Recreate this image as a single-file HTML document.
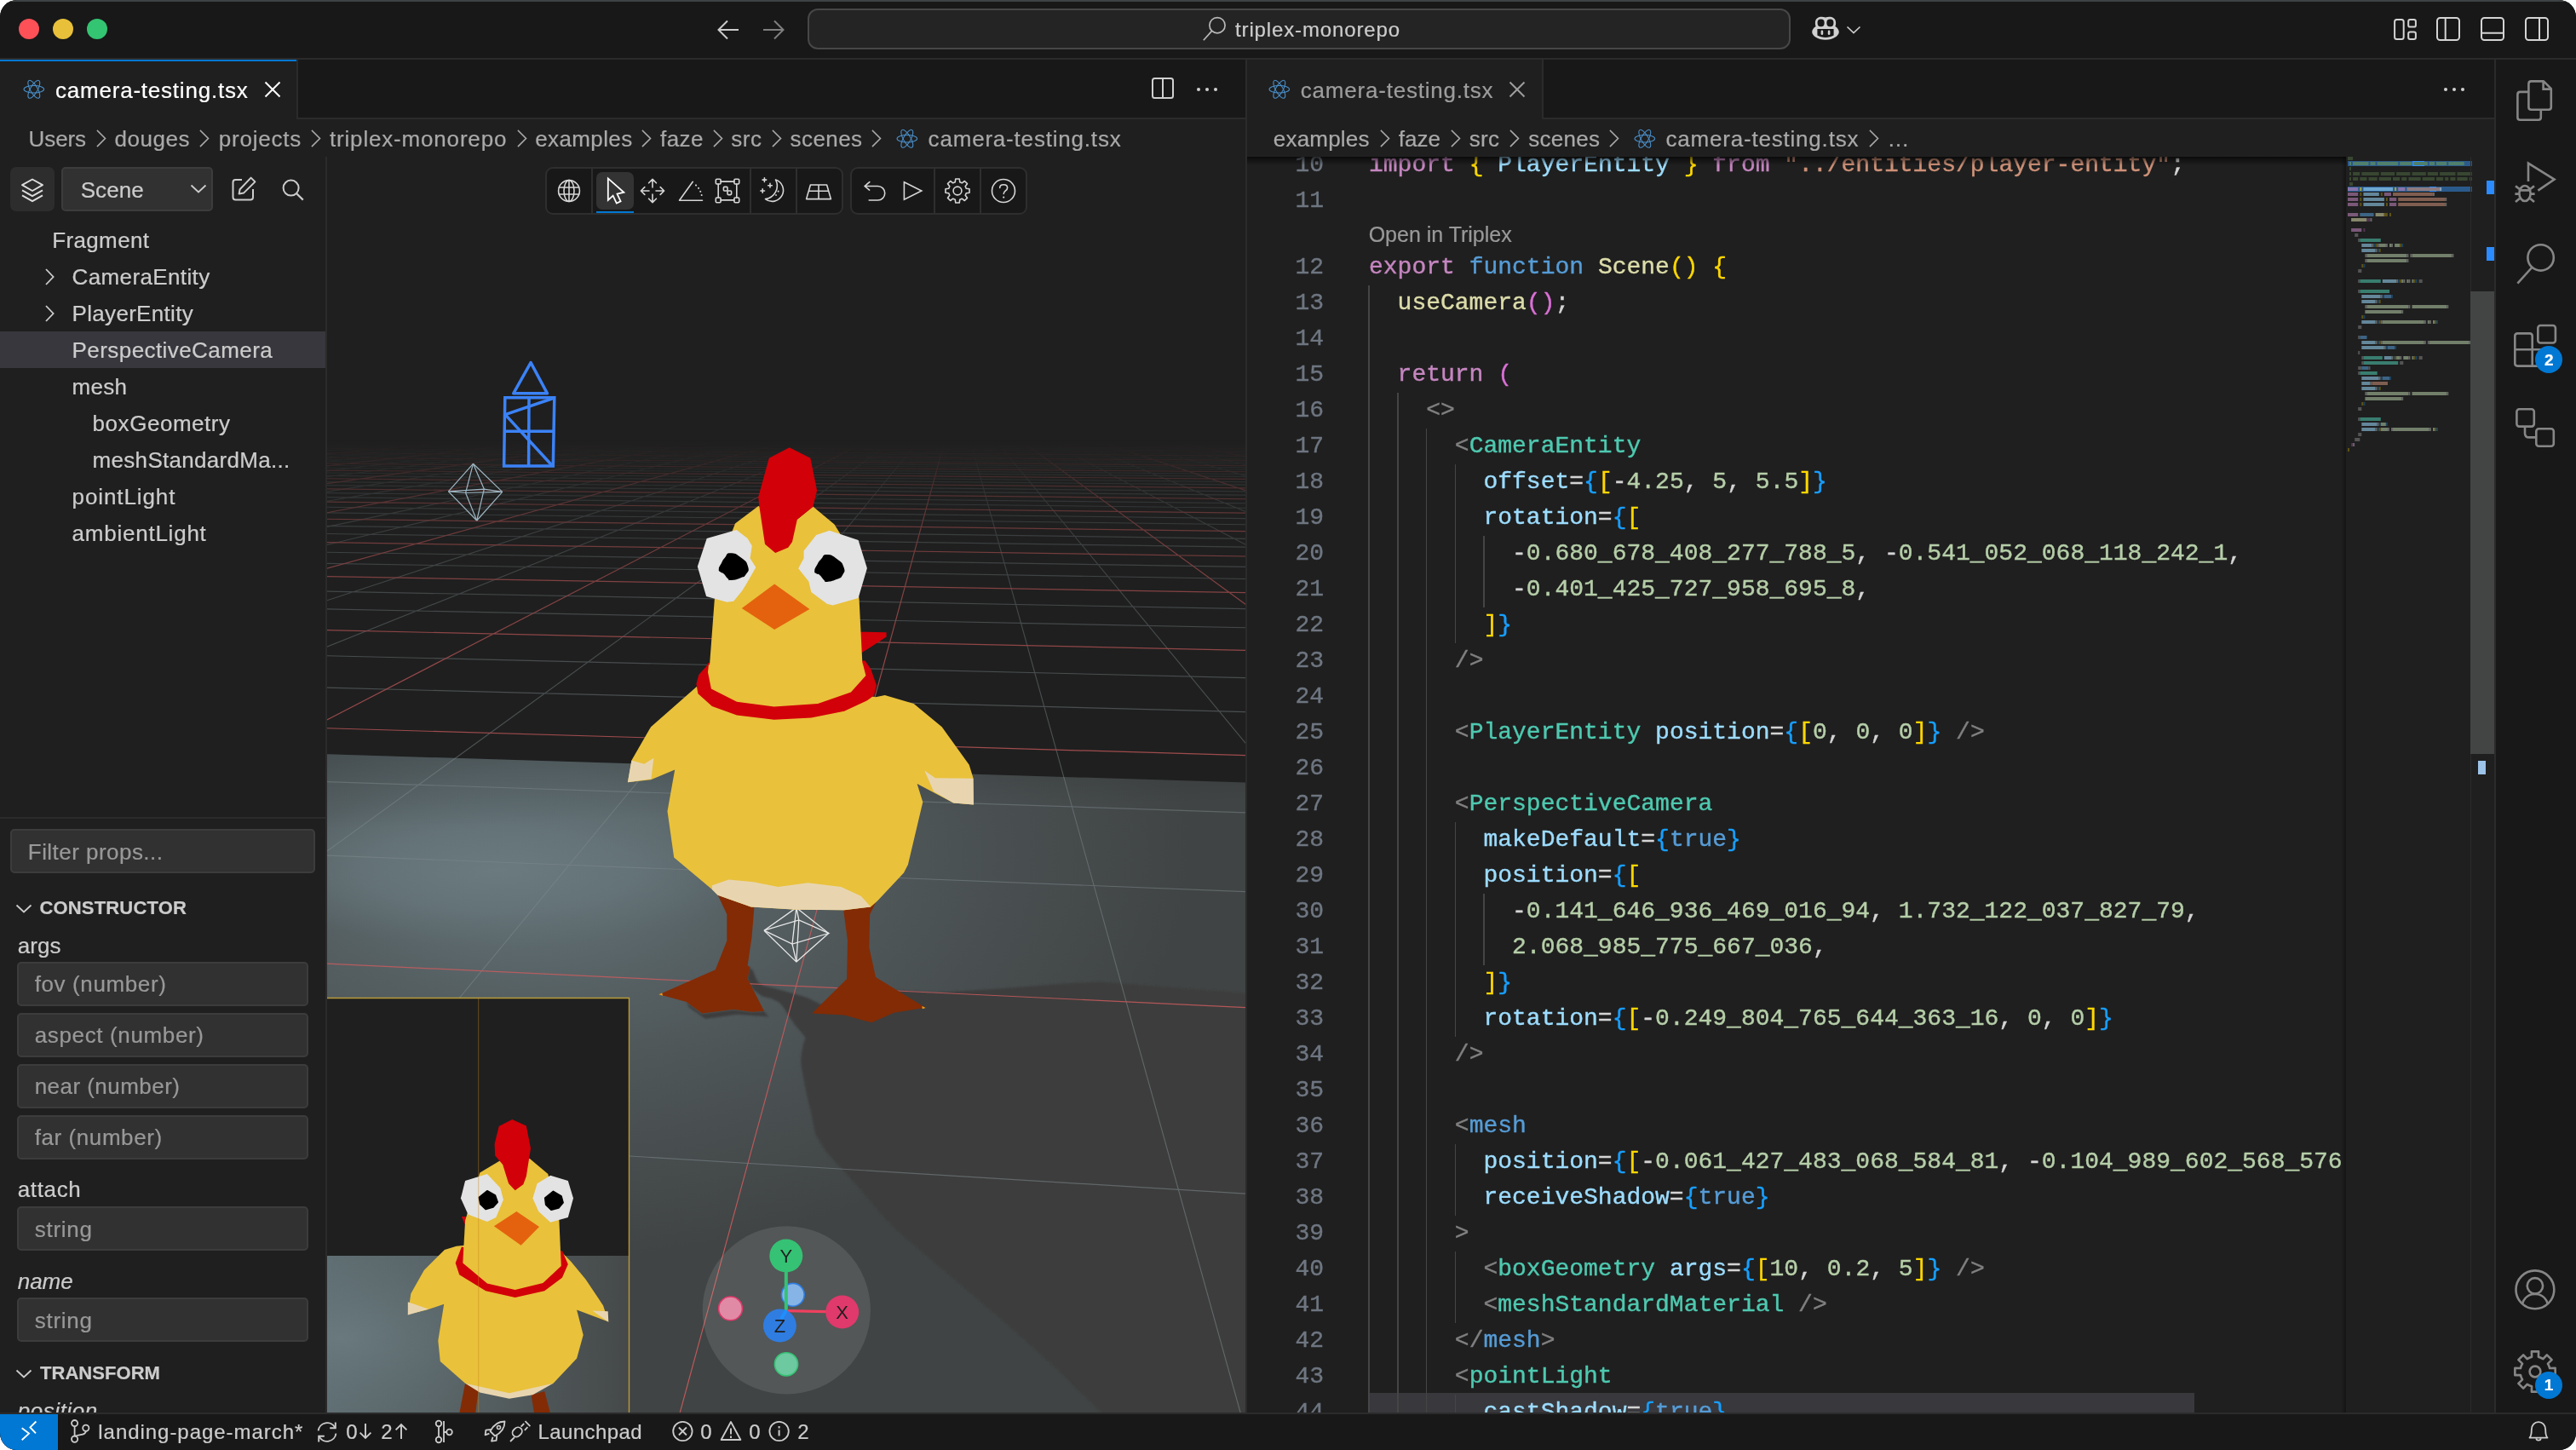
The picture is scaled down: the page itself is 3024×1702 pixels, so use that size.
<!DOCTYPE html><html lang="en"><head><meta charset="utf-8"><title>camera-testing.tsx - triplex-monorepo</title><style>
html,body{margin:0;padding:0;background:#ffffff;}
body{width:3024px;height:1702px;overflow:hidden;position:relative;font-family:"Liberation Sans",sans-serif;}
#win{transform:translateZ(0);will-change:transform;position:absolute;left:0;top:0;width:3024px;height:1702px;overflow:hidden;border-radius:20px;background:#181818;}
.b{position:absolute;display:block;}
.t{position:absolute;white-space:pre;font-family:"Liberation Sans",sans-serif;-webkit-text-stroke:0.22px;}
.ln{position:absolute;left:1464px;width:90px;text-align:right;font-family:"Liberation Mono",monospace;font-size:28px;line-height:42px;color:#6e7681;height:42px;-webkit-text-stroke:0.35px;}
.cl{position:absolute;left:1607px;white-space:pre;font-family:"Liberation Mono",monospace;font-size:28px;line-height:42px;height:42px;color:#d4d4d4;-webkit-text-stroke:0.4px;}
</style></head><body><div id="win"><div class="b " style="left:0px;top:0px;width:3024px;height:68px;background:#181818;"></div><div class="b " style="left:0px;top:68px;width:3024px;height:2px;background:#2b2b2b;"></div><div class="b " style="left:22px;top:22px;width:24px;height:24px;background:#fe5057;border-radius:50%;"></div><div class="b " style="left:62px;top:22px;width:24px;height:24px;background:#e8c03a;border-radius:50%;"></div><div class="b " style="left:102px;top:22px;width:24px;height:24px;background:#33c572;border-radius:50%;"></div><svg class="b" style="left:841px;top:23px;" width="28" height="24" viewBox="0 0 28 24" fill="none"><path d="M26 12 H2.5 M13 1.5 L2.5 12 L13 22.5" stroke="#cccccc" stroke-width="2"/></svg><svg class="b" style="left:893.5px;top:23px;" width="28" height="24" viewBox="0 0 28 24" fill="none"><path d="M2 12 H25.5 M15 1.5 L25.5 12 L15 22.5" stroke="#7f7f7f" stroke-width="2"/></svg><div class="b " style="left:948px;top:10px;width:1154px;height:48px;background:#242424;border:2px solid #474747;border-radius:12px;box-sizing:border-box;"></div><svg class="b" style="left:1411px;top:18px;" width="32" height="32" viewBox="0 0 32 32" fill="none"><circle cx="18" cy="11.7" r="9.1" stroke="#b8b8b8" stroke-width="1.7"/><path d="M11.6 18.4 L1.8 29.2" stroke="#b8b8b8" stroke-width="1.7"/></svg><div class="t " style="left:1450.0px;top:19.3px;font-size:24px;line-height:31px;color:#cccccc;letter-spacing:0.869px;">triplex-monorepo</div><svg class="b" style="left:2126px;top:19px;" width="34" height="29" viewBox="0 0 34 29" fill="none"><path d="M17 1.5 C12 -0.5 5.5 1 5 6.5 C4.7 9 5 10.5 5.6 12 C3 13.5 1.2 16 1.2 18.5 C1.2 23 8 27.8 17 27.8 C26 27.8 32.8 23 32.8 18.5 C32.8 16 31 13.5 28.4 12 C29 10.5 29.3 9 29 6.5 C28.5 1 22 -0.5 17 1.5 Z" fill="#d0d0d0"/><rect x="7.6" y="3.6" width="8" height="8.6" rx="3.6" fill="#181818"/><rect x="18.4" y="3.6" width="8" height="8.6" rx="3.6" fill="#181818"/><path d="M7.4 15 H26.6 V22.6 C24 24.2 20.5 25 17 25 C13.5 25 10 24.2 7.4 22.6 Z" fill="#181818"/><rect x="11.6" y="16.6" width="2.6" height="5.4" rx="1.3" fill="#d0d0d0"/><rect x="19.8" y="16.6" width="2.6" height="5.4" rx="1.3" fill="#d0d0d0"/></svg><svg class="b" style="left:2166px;top:28px;" width="20" height="14" viewBox="0 0 20 14" fill="none"><path d="M2.5 3.5 L10 10.5 L17.5 3.5" stroke="#cccccc" stroke-width="1.7"/></svg><svg class="b" style="left:2808px;top:20px;" width="30" height="28" viewBox="0 0 30 28" fill="none"><rect x="3.1" y="3" width="10.6" height="23" rx="2.5" stroke="#d4d4d4" stroke-width="2"/><rect x="19.2" y="3" width="8.7" height="8.6" rx="2.2" stroke="#d4d4d4" stroke-width="2"/><rect x="19.2" y="17.4" width="8.7" height="8.6" rx="2.2" stroke="#d4d4d4" stroke-width="2"/></svg><svg class="b" style="left:2859px;top:20px;" width="30" height="28" viewBox="0 0 30 28" fill="none"><rect x="2" y="1" width="26" height="26" rx="3.5" stroke="#d4d4d4" stroke-width="2"/><path d="M11.7 1 V27" stroke="#d4d4d4" stroke-width="2"/></svg><svg class="b" style="left:2911px;top:20px;" width="30" height="28" viewBox="0 0 30 28" fill="none"><rect x="2" y="1" width="26" height="26" rx="3.5" stroke="#d4d4d4" stroke-width="2"/><path d="M2 18.8 H28" stroke="#d4d4d4" stroke-width="2"/></svg><svg class="b" style="left:2963px;top:20px;" width="30" height="28" viewBox="0 0 30 28" fill="none"><rect x="2" y="1" width="26" height="26" rx="3.5" stroke="#d4d4d4" stroke-width="2"/><path d="M18 1 V27" stroke="#d4d4d4" stroke-width="2"/></svg><div class="b " style="left:0px;top:70px;width:1462px;height:68px;background:#181818;"></div><div class="b " style="left:0px;top:138px;width:1462px;height:2px;background:#2b2b2b;"></div><div class="b " style="left:0px;top:70px;width:348px;height:70px;background:#1f1f1f;"></div><div class="b " style="left:0px;top:70px;width:348px;height:2px;background:#0078d4;"></div><div class="b " style="left:348px;top:70px;width:2px;height:70px;background:#2b2b2b;"></div><svg class="b" style="left:26.9px;top:91.5px;" width="25.625" height="25.625" viewBox="0 0 25.625 25.625" fill="none"><ellipse cx="12.8125" cy="12.8125" rx="11.8125" ry="4.2524999999999995" transform="rotate(0 12.8125 12.8125)" stroke="#4a8fca" stroke-width="1.05"/><ellipse cx="12.8125" cy="12.8125" rx="11.8125" ry="4.2524999999999995" transform="rotate(60 12.8125 12.8125)" stroke="#4a8fca" stroke-width="1.05"/><ellipse cx="12.8125" cy="12.8125" rx="11.8125" ry="4.2524999999999995" transform="rotate(120 12.8125 12.8125)" stroke="#4a8fca" stroke-width="1.05"/></svg><div class="t " style="left:65.0px;top:88.9px;font-size:26px;line-height:34px;color:#ffffff;letter-spacing:0.783px;">camera-testing.tsx</div><svg class="b" style="left:310px;top:95px;" width="20" height="20" viewBox="0 0 20 20" fill="none"><path d="M1.5 1.5 L18.5 18.5 M18.5 1.5 L1.5 18.5" stroke="#ffffff" stroke-width="2"/></svg><svg class="b" style="left:1351px;top:90px;" width="28" height="28" viewBox="0 0 28 28" fill="none"><rect x="2" y="2" width="24" height="23" rx="2.5" stroke="#d0d0d0" stroke-width="2"/><path d="M14 2 V25" stroke="#d0d0d0" stroke-width="2"/></svg><svg class="b" style="left:1404px;top:101px;" width="26" height="8" viewBox="0 0 26 8" fill="none"><circle cx="3" cy="4" r="2.05" fill="#d0d0d0"/><circle cx="13" cy="4" r="2.05" fill="#d0d0d0"/><circle cx="23" cy="4" r="2.05" fill="#d0d0d0"/></svg><div class="b " style="left:0px;top:140px;width:1462px;height:44px;background:#1f1f1f;"></div><div class="t " style="left:33.6px;top:145.5px;font-size:26px;line-height:34px;color:#a9a9a9;letter-spacing:-0.101px;">Users</div><svg class="b" style="left:112.5px;top:152.0px;" width="12.5" height="21" viewBox="0 0 12.5 21" fill="none"><path d="M1.5 1.5 L10.5 10.5 L1.5 19.5" stroke="#a9a9a9" stroke-width="1.6" stroke-linecap="square"/></svg><div class="t " style="left:134.6px;top:145.5px;font-size:26px;line-height:34px;color:#a9a9a9;letter-spacing:0.515px;">douges</div><svg class="b" style="left:234px;top:152.0px;" width="12.5" height="21" viewBox="0 0 12.5 21" fill="none"><path d="M1.5 1.5 L10.5 10.5 L1.5 19.5" stroke="#a9a9a9" stroke-width="1.6" stroke-linecap="square"/></svg><div class="t " style="left:256.8px;top:145.5px;font-size:26px;line-height:34px;color:#a9a9a9;letter-spacing:0.769px;">projects</div><svg class="b" style="left:364.5px;top:152.0px;" width="12.5" height="21" viewBox="0 0 12.5 21" fill="none"><path d="M1.5 1.5 L10.5 10.5 L1.5 19.5" stroke="#a9a9a9" stroke-width="1.6" stroke-linecap="square"/></svg><div class="t " style="left:387.0px;top:145.5px;font-size:26px;line-height:34px;color:#a9a9a9;letter-spacing:0.819px;">triplex-monorepo</div><svg class="b" style="left:606.5px;top:152.0px;" width="12.5" height="21" viewBox="0 0 12.5 21" fill="none"><path d="M1.5 1.5 L10.5 10.5 L1.5 19.5" stroke="#a9a9a9" stroke-width="1.6" stroke-linecap="square"/></svg><div class="t " style="left:628.3px;top:145.5px;font-size:26px;line-height:34px;color:#a9a9a9;letter-spacing:0.365px;">examples</div><svg class="b" style="left:753px;top:152.0px;" width="12.5" height="21" viewBox="0 0 12.5 21" fill="none"><path d="M1.5 1.5 L10.5 10.5 L1.5 19.5" stroke="#a9a9a9" stroke-width="1.6" stroke-linecap="square"/></svg><div class="t " style="left:775.0px;top:145.5px;font-size:26px;line-height:34px;color:#a9a9a9;letter-spacing:0.411px;">faze</div><svg class="b" style="left:836.6px;top:152.0px;" width="12.5" height="21" viewBox="0 0 12.5 21" fill="none"><path d="M1.5 1.5 L10.5 10.5 L1.5 19.5" stroke="#a9a9a9" stroke-width="1.6" stroke-linecap="square"/></svg><div class="t " style="left:858.3px;top:145.5px;font-size:26px;line-height:34px;color:#a9a9a9;letter-spacing:0.509px;">src</div><svg class="b" style="left:906px;top:152.0px;" width="12.5" height="21" viewBox="0 0 12.5 21" fill="none"><path d="M1.5 1.5 L10.5 10.5 L1.5 19.5" stroke="#a9a9a9" stroke-width="1.6" stroke-linecap="square"/></svg><div class="t " style="left:927.6px;top:145.5px;font-size:26px;line-height:34px;color:#a9a9a9;letter-spacing:0.418px;">scenes</div><svg class="b" style="left:1023px;top:152.0px;" width="12.5" height="21" viewBox="0 0 12.5 21" fill="none"><path d="M1.5 1.5 L10.5 10.5 L1.5 19.5" stroke="#a9a9a9" stroke-width="1.6" stroke-linecap="square"/></svg><svg class="b" style="left:1051.9px;top:150.2px;" width="25.625" height="25.625" viewBox="0 0 25.625 25.625" fill="none"><ellipse cx="12.8125" cy="12.8125" rx="11.8125" ry="4.2524999999999995" transform="rotate(0 12.8125 12.8125)" stroke="#4a8fca" stroke-width="1.05"/><ellipse cx="12.8125" cy="12.8125" rx="11.8125" ry="4.2524999999999995" transform="rotate(60 12.8125 12.8125)" stroke="#4a8fca" stroke-width="1.05"/><ellipse cx="12.8125" cy="12.8125" rx="11.8125" ry="4.2524999999999995" transform="rotate(120 12.8125 12.8125)" stroke="#4a8fca" stroke-width="1.05"/></svg><div class="t " style="left:1089.6px;top:145.5px;font-size:26px;line-height:34px;color:#a9a9a9;letter-spacing:0.805px;">camera-testing.tsx</div><div class="b " style="left:1462px;top:70px;width:2px;height:1588px;background:#2b2b2b;"></div><div class="b " style="left:1464px;top:70px;width:1464px;height:68px;background:#181818;"></div><div class="b " style="left:1464px;top:138px;width:1464px;height:2px;background:#2b2b2b;"></div><div class="b " style="left:1464px;top:70px;width:346px;height:70px;background:#1f1f1f;"></div><div class="b " style="left:1810px;top:70px;width:2px;height:70px;background:#2b2b2b;"></div><svg class="b" style="left:1488.8px;top:91.6px;" width="25.625" height="25.625" viewBox="0 0 25.625 25.625" fill="none"><ellipse cx="12.8125" cy="12.8125" rx="11.8125" ry="4.2524999999999995" transform="rotate(0 12.8125 12.8125)" stroke="#4a8fca" stroke-width="1.05"/><ellipse cx="12.8125" cy="12.8125" rx="11.8125" ry="4.2524999999999995" transform="rotate(60 12.8125 12.8125)" stroke="#4a8fca" stroke-width="1.05"/><ellipse cx="12.8125" cy="12.8125" rx="11.8125" ry="4.2524999999999995" transform="rotate(120 12.8125 12.8125)" stroke="#4a8fca" stroke-width="1.05"/></svg><div class="t " style="left:1526.8px;top:88.9px;font-size:26px;line-height:34px;color:#9d9d9d;letter-spacing:0.783px;">camera-testing.tsx</div><svg class="b" style="left:1771px;top:95px;" width="20" height="20" viewBox="0 0 20 20" fill="none"><path d="M1.5 1.5 L18.5 18.5 M18.5 1.5 L1.5 18.5" stroke="#9d9d9d" stroke-width="2"/></svg><svg class="b" style="left:2868px;top:101px;" width="26" height="8" viewBox="0 0 26 8" fill="none"><circle cx="3" cy="4" r="2.05" fill="#d0d0d0"/><circle cx="13" cy="4" r="2.05" fill="#d0d0d0"/><circle cx="23" cy="4" r="2.05" fill="#d0d0d0"/></svg><div class="b " style="left:1464px;top:140px;width:1464px;height:44px;background:#1f1f1f;"></div><div class="t " style="left:1494.8px;top:145.5px;font-size:26px;line-height:34px;color:#a9a9a9;letter-spacing:0.190px;">examples</div><svg class="b" style="left:1619.5px;top:152.0px;" width="12.5" height="21" viewBox="0 0 12.5 21" fill="none"><path d="M1.5 1.5 L10.5 10.5 L1.5 19.5" stroke="#a9a9a9" stroke-width="1.6" stroke-linecap="square"/></svg><div class="t " style="left:1641.8px;top:145.5px;font-size:26px;line-height:34px;color:#a9a9a9;letter-spacing:0.011px;">faze</div><svg class="b" style="left:1702.5px;top:152.0px;" width="12.5" height="21" viewBox="0 0 12.5 21" fill="none"><path d="M1.5 1.5 L10.5 10.5 L1.5 19.5" stroke="#a9a9a9" stroke-width="1.6" stroke-linecap="square"/></svg><div class="t " style="left:1724.7px;top:145.5px;font-size:26px;line-height:34px;color:#a9a9a9;letter-spacing:0.343px;">src</div><svg class="b" style="left:1772px;top:152.0px;" width="12.5" height="21" viewBox="0 0 12.5 21" fill="none"><path d="M1.5 1.5 L10.5 10.5 L1.5 19.5" stroke="#a9a9a9" stroke-width="1.6" stroke-linecap="square"/></svg><div class="t " style="left:1794.2px;top:145.5px;font-size:26px;line-height:34px;color:#a9a9a9;letter-spacing:0.302px;">scenes</div><svg class="b" style="left:1889px;top:152.0px;" width="12.5" height="21" viewBox="0 0 12.5 21" fill="none"><path d="M1.5 1.5 L10.5 10.5 L1.5 19.5" stroke="#a9a9a9" stroke-width="1.6" stroke-linecap="square"/></svg><svg class="b" style="left:1918.0px;top:150.2px;" width="25.625" height="25.625" viewBox="0 0 25.625 25.625" fill="none"><ellipse cx="12.8125" cy="12.8125" rx="11.8125" ry="4.2524999999999995" transform="rotate(0 12.8125 12.8125)" stroke="#4a8fca" stroke-width="1.05"/><ellipse cx="12.8125" cy="12.8125" rx="11.8125" ry="4.2524999999999995" transform="rotate(60 12.8125 12.8125)" stroke="#4a8fca" stroke-width="1.05"/><ellipse cx="12.8125" cy="12.8125" rx="11.8125" ry="4.2524999999999995" transform="rotate(120 12.8125 12.8125)" stroke="#4a8fca" stroke-width="1.05"/></svg><div class="t " style="left:1955.4px;top:145.5px;font-size:26px;line-height:34px;color:#a9a9a9;letter-spacing:0.805px;">camera-testing.tsx</div><svg class="b" style="left:2193.5px;top:152.0px;" width="12.5" height="21" viewBox="0 0 12.5 21" fill="none"><path d="M1.5 1.5 L10.5 10.5 L1.5 19.5" stroke="#a9a9a9" stroke-width="1.6" stroke-linecap="square"/></svg><div class="t " style="left:2215.5px;top:145.5px;font-size:26px;line-height:34px;color:#a9a9a9;letter-spacing:-7.500px;">…</div><div class="b " style="left:2928px;top:70px;width:2px;height:1588px;background:#2b2b2b;"></div><div class="b " style="left:2930px;top:70px;width:94px;height:1588px;background:#181818;"></div><svg class="b" style="left:2950px;top:90px;" width="50" height="56" viewBox="0 0 50 56" fill="none"><path d="M18.3 17.9 H8.4 Q5.4 17.9 5.4 20.9 V47.8 Q5.4 50.8 8.4 50.8 H29.8 Q32.8 50.8 32.8 47.8 V40" stroke="#868686" stroke-width="2.6"/><path d="M21.5 5.4 H36 L44.8 14.2 V35.8 Q44.8 38.8 41.8 38.8 H21.5 Q18.4 38.8 18.4 35.8 V8.4 Q18.4 5.4 21.5 5.4 Z" stroke="#868686" stroke-width="2.6" stroke-linejoin="round"/><path d="M35.6 5.8 V14.6 H44.6" stroke="#868686" stroke-width="2.6"/></svg><svg class="b" style="left:2948px;top:186px;" width="56" height="56" viewBox="0 0 56 56" fill="none"><path d="M20 27 V5.6 L50.6 24.6 L31.4 37.6" stroke="#868686" stroke-width="2.6" stroke-linejoin="miter"/><ellipse cx="16" cy="41" rx="6.6" ry="9" stroke="#868686" stroke-width="2.6"/><path d="M9.6 37.4 H22.4 M4.4 41.6 H9.4 M22.6 41.6 H27.6 M5 32.4 L9.8 36 M27 32.4 L22.2 36 M5 51 L9.8 47 M27 51 L22.2 47" stroke="#868686" stroke-width="2.6"/></svg><svg class="b" style="left:2950px;top:282px;" width="54" height="56" viewBox="0 0 54 56" fill="none"><circle cx="32.6" cy="20.4" r="15.2" stroke="#868686" stroke-width="2.6"/><path d="M22.2 32 L5.4 50.6" stroke="#868686" stroke-width="2.6"/></svg><svg class="b" style="left:2948px;top:378px;" width="56" height="56" viewBox="0 0 56 56" fill="none"><path d="M24.7 32.3 V16.4 Q24.7 13.4 21.7 13.4 H7.3 Q4.3 13.4 4.3 16.4 V48.6 Q4.3 51.6 7.3 51.6 H39.6 Q42.6 51.6 42.6 48.6 V35.3 Q42.6 32.3 39.6 32.3 H4.3 M24.7 32.3 V51.6" stroke="#868686" stroke-width="2.6"/><rect x="31.3" y="4" width="20.6" height="20.5" rx="3" stroke="#868686" stroke-width="2.6"/></svg><div class="b " style="left:2976px;top:406px;width:32px;height:32px;background:#0078d4;border-radius:50%;"></div><div class="t " style="left:2987.0px;top:409.5px;font-size:19px;line-height:25px;color:#ffffff;font-weight:700;">2</div><svg class="b" style="left:2950px;top:476px;" width="52" height="52" viewBox="0 0 52 52" fill="none"><rect x="4.4" y="4.2" width="20.4" height="20.4" rx="3" stroke="#868686" stroke-width="2.6"/><rect x="27.3" y="27.3" width="20.5" height="20.4" rx="3" stroke="#868686" stroke-width="2.6"/><path d="M14 24.6 V32.4 Q14 37.4 19 37.4 H27.3" stroke="#868686" stroke-width="2.6"/></svg><svg class="b" style="left:2950px;top:1488px;" width="52" height="52" viewBox="0 0 52 52" fill="none"><circle cx="25.9" cy="25.8" r="22.4" stroke="#868686" stroke-width="2.6"/><circle cx="25.9" cy="21.3" r="9.2" stroke="#868686" stroke-width="2.6"/><path d="M11 42.5 C13 35 19 31 25.9 31 C32.8 31 38.8 35 40.8 42.5" stroke="#868686" stroke-width="2.6"/></svg><svg class="b" style="left:2947.9px;top:1581.8px;" width="56" height="56" viewBox="0 0 56 56" fill="none"><path d="M21.26 11.74 L24.06 10.85 L23.90 4.35 L32.10 4.35 L31.94 10.85 L34.74 11.74 L37.34 13.08 L41.82 8.38 L47.62 14.18 L42.92 18.66 L44.26 21.26 L45.15 24.06 L51.65 23.90 L51.65 32.10 L45.15 31.94 L44.26 34.74 L42.92 37.34 L47.62 41.82 L41.82 47.62 L37.34 42.92 L34.74 44.26 L31.94 45.15 L32.10 51.65 L23.90 51.65 L24.06 45.15 L21.26 44.26 L18.66 42.92 L14.18 47.62 L8.38 41.82 L13.08 37.34 L11.74 34.74 L10.85 31.94 L4.35 32.10 L4.35 23.90 L10.85 24.06 L11.74 21.26 L13.08 18.66 L8.38 14.18 L14.18 8.38 L18.66 13.08 Z" stroke="#868686" stroke-width="2.6" stroke-linejoin="round"/><circle cx="28.0" cy="28.0" r="6.4" stroke="#868686" stroke-width="2.6"/></svg><div class="b " style="left:2976px;top:1610px;width:32px;height:32px;background:#0078d4;border-radius:50%;"></div><div class="t " style="left:2986.8px;top:1613.3px;font-size:19px;line-height:25px;color:#ffffff;font-weight:700;">1</div><div class="b " style="left:0px;top:1658px;width:3024px;height:44px;background:#181818;"></div><div class="b " style="left:0px;top:1658px;width:3024px;height:2px;background:#2b2b2b;"></div><div class="b " style="left:0px;top:1660px;width:68px;height:42px;background:#0078d4;"></div><svg class="b" style="left:22px;top:1667px;" width="24" height="28" viewBox="0 0 24 28" fill="none"><path d="M3.7 9.2 L12 15.6 L3.7 23.2 M20.4 1.5 L13.4 8.4 L20 15.4" stroke="#ffffff" stroke-width="1.9"/></svg><svg class="b" style="left:82px;top:1665px;" width="26" height="30" viewBox="0 0 26 30" fill="none"><circle cx="5.6" cy="5.6" r="3.6" stroke="#cccccc" stroke-width="1.8"/><circle cx="18.8" cy="11.2" r="3.6" stroke="#cccccc" stroke-width="1.8"/><circle cx="5.6" cy="24.3" r="3.6" stroke="#cccccc" stroke-width="1.8"/><path d="M5.6 9.2 V20.7 M18.8 14.8 C18.8 19.5 13 18.5 8.5 20 C6.8 20.6 5.8 20.8 5.6 20.9" stroke="#cccccc" stroke-width="1.8"/></svg><div class="t " style="left:115.3px;top:1665.0px;font-size:24px;line-height:31px;color:#cccccc;letter-spacing:0.958px;">landing-page-march*</div><svg class="b" style="left:369px;top:1666px;" width="30" height="30" viewBox="0 0 30 30" fill="none"><path d="M4.6 13.4 A10.5 10.5 0 0 1 24.2 9.6 M25.4 16.6 A10.5 10.5 0 0 1 5.8 20.4" stroke="#cccccc" stroke-width="1.9"/><path d="M24.8 3.6 V10.2 H18.2 M5.2 26.4 V19.8 H11.8" stroke="#cccccc" stroke-width="1.9"/></svg><div class="t " style="left:406.2px;top:1665.0px;font-size:24px;line-height:31px;color:#cccccc;">0</div><svg class="b" style="left:420.5px;top:1669.5px;" width="16" height="20" viewBox="0 0 16 20" fill="none"><path d="M8 1 V18 M1.6 11.6 L8 18 L14.4 11.6" stroke="#cccccc" stroke-width="1.9"/></svg><div class="t " style="left:447.2px;top:1665.0px;font-size:24px;line-height:31px;color:#cccccc;">2</div><svg class="b" style="left:462.5px;top:1669.5px;" width="16" height="20" viewBox="0 0 16 20" fill="none"><path d="M8 19 V2 M1.6 8.4 L8 2 L14.4 8.4" stroke="#cccccc" stroke-width="1.9"/></svg><svg class="b" style="left:507px;top:1665px;" width="28" height="30" viewBox="0 0 28 30" fill="none"><circle cx="8" cy="6" r="3.3" stroke="#cccccc" stroke-width="1.8"/><circle cx="8" cy="25" r="3.3" stroke="#cccccc" stroke-width="1.8"/><circle cx="20.5" cy="16" r="3.3" stroke="#cccccc" stroke-width="1.8"/><path d="M8 9.3 V21.7 M14 3 V28 M14 16 H17.2" stroke="#cccccc" stroke-width="1.8"/></svg><svg class="b" style="left:567px;top:1665px;" width="28" height="30" viewBox="0 0 28 30" fill="none"><path d="M25.5 3.5 C18 3.5 12 8 8.5 15 L14 20.5 C21 17 25.5 11 25.5 3.5 Z" stroke="#cccccc" stroke-width="1.8" stroke-linejoin="round"/><path d="M9.8 12.8 L3.4 13.6 L2.6 19.4 L7.4 17.6 M16.4 19.4 L15.6 25.8 L10 26.6 L11.6 21.8" stroke="#cccccc" stroke-width="1.8" stroke-linejoin="round"/><circle cx="18.5" cy="10.5" r="2" stroke="#cccccc" stroke-width="1.6"/></svg><svg class="b" style="left:596px;top:1665px;" width="28" height="30" viewBox="0 0 28 30" fill="none"><path d="M3 27 L8 22" stroke="#cccccc" stroke-width="1.8"/><rect x="5.2" y="11.2" width="12" height="9.4" rx="4.7" transform="rotate(-45 11.2 15.9)" stroke="#cccccc" stroke-width="1.8"/><path d="M15.6 9.6 L19.2 6 M19.8 13.8 L23.4 10.2 M20.5 3.2 L26.4 9.2" stroke="#cccccc" stroke-width="1.8"/></svg><div class="t " style="left:631.6px;top:1665.0px;font-size:24px;line-height:31px;color:#cccccc;letter-spacing:0.391px;">Launchpad</div><svg class="b" style="left:788px;top:1666px;" width="28" height="28" viewBox="0 0 28 28" fill="none"><circle cx="13.4" cy="14" r="11.2" stroke="#cccccc" stroke-width="1.8"/><path d="M8.9 9.5 L17.9 18.5 M17.9 9.5 L8.9 18.5" stroke="#cccccc" stroke-width="1.8"/></svg><div class="t " style="left:822.2px;top:1665.0px;font-size:24px;line-height:31px;color:#cccccc;">0</div><svg class="b" style="left:845px;top:1666px;" width="28" height="28" viewBox="0 0 28 28" fill="none"><path d="M13 3 L24.4 24 H1.6 Z" stroke="#cccccc" stroke-width="1.8" stroke-linejoin="round"/><path d="M13 10.5 V17.5 M13 19.6 V22" stroke="#cccccc" stroke-width="1.9"/></svg><div class="t " style="left:879.3px;top:1665.0px;font-size:24px;line-height:31px;color:#cccccc;">0</div><svg class="b" style="left:902px;top:1666px;" width="28" height="28" viewBox="0 0 28 28" fill="none"><circle cx="12.6" cy="14" r="11.2" stroke="#cccccc" stroke-width="1.8"/><path d="M12.6 12.4 V19.6 M12.6 8 V10.4" stroke="#cccccc" stroke-width="2"/></svg><div class="t " style="left:936.3px;top:1665.0px;font-size:24px;line-height:31px;color:#cccccc;">2</div><svg class="b" style="left:2966px;top:1665px;" width="28" height="30" viewBox="0 0 28 30" fill="none"><path d="M3.5 22.6 H24.5 C22.4 20.4 22.2 17.6 22.2 13.2 C22.2 7.8 18.6 4.2 14 4.2 C9.4 4.2 5.8 7.8 5.8 13.2 C5.8 17.6 5.6 20.4 3.5 22.6 Z" stroke="#cccccc" stroke-width="1.8" stroke-linejoin="round"/><path d="M11.4 23.2 C11.4 26.4 16.6 26.4 16.6 23.2" stroke="#cccccc" stroke-width="1.8"/></svg><svg class="b" style="left:384px;top:184px;" width="1078" height="1474" viewBox="384 184 1078 1474" ><defs>
<linearGradient id="gfade" gradientUnits="userSpaceOnUse" x1="0" y1="500" x2="0" y2="1660"><stop offset="0.0138" stop-color="#fff" stop-opacity="0.000"/><stop offset="0.0216" stop-color="#fff" stop-opacity="0.026"/><stop offset="0.0302" stop-color="#fff" stop-opacity="0.079"/><stop offset="0.0388" stop-color="#fff" stop-opacity="0.137"/><stop offset="0.0517" stop-color="#fff" stop-opacity="0.219"/><stop offset="0.0690" stop-color="#fff" stop-opacity="0.313"/><stop offset="0.0948" stop-color="#fff" stop-opacity="0.421"/><stop offset="0.1293" stop-color="#fff" stop-opacity="0.524"/><stop offset="0.1724" stop-color="#fff" stop-opacity="0.612"/><stop offset="0.2414" stop-color="#fff" stop-opacity="0.701"/><stop offset="0.3448" stop-color="#fff" stop-opacity="0.777"/><stop offset="0.5172" stop-color="#fff" stop-opacity="0.844"/><stop offset="0.7759" stop-color="#fff" stop-opacity="0.893"/><stop offset="1.0000" stop-color="#fff" stop-opacity="0.915"/></linearGradient>
<mask id="gmask" maskUnits="userSpaceOnUse" x="380" y="500" width="1090" height="1165"><rect x="380" y="500" width="1090" height="1165" fill="url(#gfade)"/></mask>
<radialGradient id="fl1" gradientUnits="userSpaceOnUse" cx="0" cy="0" r="1" gradientTransform="translate(620 1000) scale(780 480)">
<stop offset="0" stop-color="rgb(98,112,117)"/><stop offset="0.2" stop-color="rgb(93,106,110)"/><stop offset="0.37" stop-color="rgb(85,95,98)"/><stop offset="0.5" stop-color="rgb(80,88,90)"/><stop offset="0.62" stop-color="rgb(76,83,85)"/><stop offset="0.81" stop-color="rgb(70,75,76)"/><stop offset="1" stop-color="rgb(64,68,68)"/></radialGradient>
<radialGradient id="fl2" gradientUnits="userSpaceOnUse" cx="0" cy="0" r="1" gradientTransform="translate(585 1022) scale(300 90)">
<stop offset="0" stop-color="rgb(106,122,127)" stop-opacity="1"/><stop offset="0.55" stop-color="rgb(102,117,122)" stop-opacity="0.75"/><stop offset="1" stop-color="rgb(95,109,113)" stop-opacity="0"/></radialGradient>
<linearGradient id="fl3" gradientUnits="userSpaceOnUse" x1="0" y1="885" x2="3" y2="985"><stop offset="0" stop-color="#000" stop-opacity="0.2"/><stop offset="1" stop-color="#000" stop-opacity="0"/></linearGradient>
<linearGradient id="ifloor" gradientUnits="userSpaceOnUse" x1="384" y1="0" x2="739" y2="0"><stop offset="0" stop-color="#5f6e72"/><stop offset="0.55" stop-color="#545d5f"/><stop offset="1" stop-color="#454949"/></linearGradient>
<radialGradient id="ispec" gradientUnits="userSpaceOnUse" cx="0" cy="0" r="1" gradientTransform="translate(400 1570) scale(230 120)"><stop offset="0" stop-color="#6b7b80" stop-opacity="0.85"/><stop offset="1" stop-color="#5f6e72" stop-opacity="0"/></radialGradient>
<filter id="blur2" x="-5%" y="-5%" width="110%" height="110%"><feGaussianBlur stdDeviation="1.3"/></filter>
<clipPath id="floorclip"><polygon points="380,885.18 1466,918.62 1466,1662 380,1662"/></clipPath>
</defs><rect x="384" y="184" width="1078" height="1474" fill="#1f1f1f"/><polygon points="380,885.18 1466,918.62 1466,1662 380,1662" fill="url(#fl1)"/><polygon points="380,885.18 1466,918.62 1466,1662 380,1662" fill="url(#fl2)"/><polygon points="380,885.18 1466,918.62 1466,1662 380,1662" fill="url(#fl3)"/><g clip-path="url(#floorclip)"><polygon points="879.9,1135.2 884.4,1140.3 887.4,1148.4 890.5,1153.4 896.5,1156.9 910.6,1160.5 930.8,1166.0 946.0,1170.6 959.1,1176.6 964.1,1179.6 1000.0,1176.0 1054.0,1162.5 1100.0,1165.0 1180.0,1160.0 1250.0,1154.5 1291.0,1152.4 1333.0,1155.8 1470.0,1166.0 1470.0,1664.0 1297.7,1664.0 1247.0,1612.8 1179.4,1551.9 1111.8,1494.5 1052.0,1443.8 1034.0,1424.6 1011.1,1397.2 986.2,1369.8 969.5,1351.5 957.1,1330.8 952.9,1310.0 946.2,1281.5 941.4,1256.1 939.9,1246.3 940.9,1236.2 942.9,1226.1 945.5,1218.0 940.9,1211.9 933.9,1203.9 926.8,1193.8 920.7,1183.7 914.7,1176.6 905.6,1172.1 894.5,1169.5 884.4,1161.5 877.3,1149.4" fill="#3e3e3e" filter="url(#blur2)"/><polygon points="805.8,1176.4 824.2,1190.0 861.1,1185.2 882.5,1188.1 897.0,1187.1 902.3,1193.5 865.0,1190.8 828.1,1196.0 808.7,1182.3" fill="#3e3e3e" filter="url(#blur2)"/></g><g mask="url(#gmask)"><path d="M379.0 501.8L413.0 500.0 M379.0 503.1L436.3 500.0 M379.0 506.0L482.6 500.0 M379.0 507.6L505.6 500.0 M379.0 511.2L551.3 500.0 M379.0 513.2L574.1 500.0 M379.0 517.7L619.3 500.0 M379.0 520.3L641.7 500.0 M379.0 526.2L686.4 500.0 M379.0 529.6L708.6 500.0 M379.0 537.5L752.7 500.0 M379.0 542.2L774.6 500.0 M379.0 553.5L818.2 500.0 M379.0 560.4L839.8 500.0 M379.0 577.9L882.9 500.0 M379.0 589.1L904.3 500.0 M379.0 619.4L946.8 500.0 M379.0 640.7L968.0 500.0 M379.0 706.4L1010.0 500.0 M379.0 761.2L1030.9 500.0 M379.0 1002.7L1072.5 500.0 M379.0 1365.7L1093.1 500.0 M1457.5 1663.0L1134.2 500.0 M1467.0 878.1L1154.6 500.0 M1467.0 641.8L1195.2 500.0 M1467.0 602.4L1215.4 500.0 M1467.0 559.8L1255.5 500.0 M1467.0 547.0L1275.5 500.0 M1467.0 529.6L1315.1 500.0 M1467.0 523.3L1334.8 500.0 M1467.0 513.8L1374.1 500.0 M1467.0 510.1L1393.6 500.0 M1467.0 504.2L1432.3 500.0 M1467.0 501.7L1451.6 500.0 M379.0 1334.9L1467.0 1401.5 M379.0 1003.9L1467.0 1046.8 M379.0 917.4L1467.0 954.0 M379.0 807.0L1467.0 835.8 M379.0 769.6L1467.0 795.7 M379.0 714.8L1467.0 736.9 M379.0 694.1L1467.0 714.7 M379.0 661.3L1467.0 679.6 M379.0 648.2L1467.0 665.5 M379.0 626.4L1467.0 642.2 M379.0 617.3L1467.0 632.4 M379.0 601.8L1467.0 615.8 M379.0 595.2L1467.0 608.7 M379.0 583.6L1467.0 596.3 M379.0 578.5L1467.0 590.8 M379.0 569.5L1467.0 581.2 M379.0 565.5L1467.0 576.9 M379.0 558.3L1467.0 569.2 M379.0 555.0L1467.0 565.7 M379.0 549.2L1467.0 559.4 M379.0 546.5L1467.0 556.5 M379.0 541.6L1467.0 551.3 M379.0 539.3L1467.0 548.9 M379.0 535.2L1467.0 544.4 M379.0 533.3L1467.0 542.4 M379.0 529.7L1467.0 538.6 M379.0 528.1L1467.0 536.8 M379.0 525.0L1467.0 533.5 M379.0 523.6L1467.0 532.0 M379.0 520.9L1467.0 529.1 M379.0 519.7L1467.0 527.8 M379.0 517.3L1467.0 525.2 M379.0 516.2L1467.0 524.0 M379.0 514.1L1467.0 521.8 M379.0 513.1L1467.0 520.7 M379.0 511.2L1467.0 518.7 M379.0 510.3L1467.0 517.7 M379.0 508.6L1467.0 515.9 M379.0 507.8L1467.0 515.1 M379.0 506.3L1467.0 513.4 M379.0 505.5L1467.0 512.6 M379.0 504.2L1467.0 511.2 M379.0 503.5L1467.0 510.4 M379.0 502.2L1467.0 509.1 M379.0 501.6L1467.0 508.4 M379.0 500.5L1467.0 507.2 M396.3 500.0L1467.0 506.6 M572.5 500.0L1467.0 505.4 M658.6 500.0L1467.0 504.9 M826.7 500.0L1467.0 503.8 M908.9 500.0L1467.0 503.3 M1069.6 500.0L1467.0 502.3 M1148.1 500.0L1467.0 501.9 M1301.8 500.0L1467.0 501.0 M1376.9 500.0L1467.0 500.5" stroke="#7e898c" stroke-opacity="0.62" stroke-width="1.15" fill="none"/><path d="M379.0 500.5L389.6 500.0 M379.0 504.5L459.5 500.0 M379.0 509.4L528.5 500.0 M379.0 515.4L596.7 500.0 M379.0 523.1L664.1 500.0 M379.0 533.3L730.7 500.0 M379.0 547.5L796.4 500.0 M379.0 568.4L861.4 500.0 M379.0 602.7L925.6 500.0 M379.0 668.5L989.0 500.0 M379.0 847.4L1051.7 500.0 M796.9 1663.0L1113.7 500.0 M1467.0 712.8L1174.9 500.0 M1467.0 577.2L1235.5 500.0 M1467.0 537.3L1295.3 500.0 M1467.0 518.2L1354.5 500.0 M1467.0 507.0L1413.0 500.0 M379.0 1130.8L1467.0 1182.8 M379.0 854.6L1467.0 886.8 M379.0 739.6L1467.0 763.5 M379.0 676.5L1467.0 695.8 M379.0 636.6L1467.0 653.1 M379.0 609.2L1467.0 623.7 M379.0 589.1L1467.0 602.2 M379.0 573.8L1467.0 585.8 M379.0 561.7L1467.0 572.9 M379.0 552.0L1467.0 562.4 M379.0 544.0L1467.0 553.8 M379.0 537.2L1467.0 546.6 M379.0 531.5L1467.0 540.4 M379.0 526.5L1467.0 535.1 M379.0 522.2L1467.0 530.5 M379.0 518.4L1467.0 526.5 M379.0 515.1L1467.0 522.9 M379.0 512.1L1467.0 519.7 M379.0 509.4L1467.0 516.8 M379.0 507.0L1467.0 514.2 M379.0 504.8L1467.0 511.9 M379.0 502.8L1467.0 509.8 M379.0 501.0L1467.0 507.8 M485.1 500.0L1467.0 506.0 M743.3 500.0L1467.0 504.4 M989.8 500.0L1467.0 502.8 M1225.5 500.0L1467.0 501.4 M1451.0 500.0L1467.0 500.1" stroke="#cc5c5e" stroke-opacity="0.97" stroke-width="1.2" fill="none"/></g><polygon points="623.1,425.6 602.7,461.8 642.5,461.8" stroke="#3b82f6" stroke-width="3.5" fill="none" stroke-linejoin="round"/><polygon points="592.8,466.7 650.8,466.7 649.3,547.1 591.6,547.1" stroke="#3b82f6" stroke-width="3.5" fill="none"/><line x1="621.0" y1="466.7" x2="620.6" y2="547.1" stroke="#3b82f6" stroke-width="3.5" /><line x1="592.5" y1="506.3" x2="649.9" y2="506.3" stroke="#3b82f6" stroke-width="3.5" /><polyline points="650.8,467.0 593.1,486.6 648.2,546.5" stroke="#3b82f6" stroke-width="3.5" fill="none" stroke-linejoin="round"/><line x1="555.4" y1="544.3" x2="526.4" y2="576.9" stroke="#9db6c2" stroke-width="1.2" /><line x1="559.7" y1="611.0" x2="526.4" y2="576.9" stroke="#9db6c2" stroke-width="1.2" /><line x1="555.4" y1="544.3" x2="589.7" y2="577.4" stroke="#9db6c2" stroke-width="1.2" /><line x1="559.7" y1="611.0" x2="589.7" y2="577.4" stroke="#9db6c2" stroke-width="1.2" /><line x1="555.4" y1="544.3" x2="546.6" y2="578.5" stroke="#9db6c2" stroke-width="1.2" /><line x1="559.7" y1="611.0" x2="546.6" y2="578.5" stroke="#9db6c2" stroke-width="1.2" /><line x1="555.4" y1="544.3" x2="568.3" y2="574.1" stroke="#9db6c2" stroke-width="1.2" /><line x1="559.7" y1="611.0" x2="568.3" y2="574.1" stroke="#9db6c2" stroke-width="1.2" /><polyline points="526.4,576.9 546.6,578.5 589.7,577.4 568.3,574.1 526.4,576.9" stroke="#9db6c2" stroke-width="1.2" fill="none" /><polygon points="842.7,1050.8 885.4,1065.4 882.5,1100.3 877.6,1133.3 880.5,1135.3 877.6,1148.9 897.0,1186.7 882.5,1187.7 861.1,1184.8 824.2,1189.6 805.8,1176.0 773.8,1167.3 839.8,1138.2 853.3,1104.2 853.3,1073.2" fill="#832b05" /><polygon points="990.2,1068.3 1028.0,1059.6 1021.2,1073.2 1020.3,1112.0 1028.0,1146.9 1086.3,1182.8 1049.4,1188.7 1023.2,1200.3 991.1,1191.6 953.3,1189.6 994.1,1148.9 995.0,1104.2" fill="#832b05" /><polygon points="773.4,1167.3 777.3,1165.4 778.0,1168.7" fill="#e9a020" /><polygon points="1086.6,1183.0 1082.4,1180.9 1082.8,1184.2" fill="#e9a020" /><line x1="934.9" y1="1065.4" x2="897.0" y2="1092.2" stroke="#e8e8e8" stroke-width="1.3" /><line x1="934.9" y1="1129.1" x2="897.0" y2="1092.2" stroke="#e8e8e8" stroke-width="1.3" /><line x1="934.9" y1="1065.4" x2="972.7" y2="1095.5" stroke="#e8e8e8" stroke-width="1.3" /><line x1="934.9" y1="1129.1" x2="972.7" y2="1095.5" stroke="#e8e8e8" stroke-width="1.3" /><line x1="934.9" y1="1065.4" x2="930.0" y2="1108.1" stroke="#e8e8e8" stroke-width="1.3" /><line x1="934.9" y1="1129.1" x2="930.0" y2="1108.1" stroke="#e8e8e8" stroke-width="1.3" /><line x1="934.9" y1="1065.4" x2="937.8" y2="1080.0" stroke="#e8e8e8" stroke-width="1.3" /><line x1="934.9" y1="1129.1" x2="937.8" y2="1080.0" stroke="#e8e8e8" stroke-width="1.3" /><polyline points="897.0,1092.2 930.0,1108.1 972.7,1095.5 937.8,1080.0 897.0,1092.2" stroke="#e8e8e8" stroke-width="1.3" fill="none" /><polygon points="818.4,805.6 764.1,853.2 741.7,892.0 736.9,918.2 764.1,915.3 792.2,903.6 783.5,952.2 791.2,1006.5 835.9,1044.1 842.7,1050.8 881.5,1064.4 934.9,1067.7 991.1,1068.3 1022.2,1064.4 1030.0,1057.6 1061.0,1024.6 1065.9,1014.9 1083.3,941.5 1076.6,920.1 1119.3,942.5 1142.9,944.4 1142.5,913.3 1137.7,897.8 1105.7,853.2 1072.7,826.0 1038.7,815.9 1028.0,818.2 923.2,798.8" fill="#e9c13b" /><polygon points="835.9,1039.2 855.3,1032.4 884.4,1035.3 913.5,1041.1 948.4,1036.3 987.3,1041.1 1010.6,1051.8 1022.2,1064.4 991.1,1068.3 934.9,1067.7 881.5,1064.4 842.7,1050.8 835.9,1044.1" fill="#e8d5b0" /><polygon points="741.3,892.4 756.3,896.8 767.4,889.7 764.4,914.3 736.9,918.2" fill="#e8d5b0" /><polygon points="1085.3,904.6 1097.9,913.3 1142.5,913.7 1142.9,944.4 1119.3,942.5 1096.0,928.9" fill="#e8d5b0" /><polygon points="1008.6,741.7 1040.6,742.2 1040.6,747.5 1011.5,766.3" fill="#d20008" /><polygon points="831.6,777.9 829.1,782.3 820.3,792.0 817.4,802.7 819.4,814.3 835.9,828.9 865.0,839.6 908.7,844.8 952.3,842.5 991.1,834.7 1018.3,822.1 1026.1,816.3 1029.0,804.6 1022.2,785.2 1018.3,779.4 1015.4,775.5 923.2,779.4" fill="#d20008" /><polygon points="890.2,594.1 863.0,614.5 847.5,655.3 838.8,703.8 833.0,781.1 832.0,779.4 831.0,789.1 834.9,808.5 865.0,823.7 908.7,829.5 960.1,826.0 998.9,812.4 1016.4,793.0 1012.5,777.5 1012.5,781.1 1008.6,703.8 1002.8,655.3 984.9,624.2 979.5,615.5 954.3,594.5 935.8,609.7" fill="#e9c13b" /><polygon points="829.7,632.0 818.8,665.0 829.1,699.9 853.3,706.7 861.1,705.7 870.8,694.1 875.7,686.3 887.3,666.0 880.5,655.3 882.8,640.7 877.6,632.0 864.6,621.9" fill="#e3e3e3" /><polygon points="973.7,622.7 1007.6,633.9 1017.9,666.9 1007.6,701.9 977.6,710.6 970.8,708.7 952.3,695.1 949.4,682.5 937.2,667.3 943.6,655.3 943.6,646.5 958.2,628.1" fill="#e3e3e3" /><path d="M857.5 649.3 C863.1 649.3 863.7 649.8 869.9 654.5 C876.0 659.1 876.2 658.8 878.0 664.7 C879.8 670.6 878.5 670.0 875.8 674.1 C873.1 678.2 874.4 676.4 869.0 678.4 C863.6 680.5 862.2 680.7 857.9 681.0 C853.5 681.2 857.0 681.6 854.5 679.3 C851.9 677.0 851.9 675.6 849.3 673.3 C846.8 671.0 847.6 673.1 845.9 671.6 C844.2 670.0 843.5 671.2 843.8 668.1 C844.0 665.1 844.6 665.4 846.8 661.3 C848.9 657.2 847.8 658.1 851.0 654.5 C854.2 650.9 851.8 649.3 857.5 649.3 Z" fill="#000"/><path d="M970.8 650.9 C976.4 650.9 976.8 651.8 982.7 656.2 C988.6 660.6 988.5 659.9 990.4 665.6 C992.3 671.2 991.7 670.6 989.1 675.0 C986.6 679.3 987.4 677.8 981.9 680.1 C976.4 682.5 975.1 682.6 970.8 682.9 C966.4 683.1 969.9 683.3 967.3 681.0 C964.8 678.6 964.9 677.3 962.2 675.0 C959.5 672.7 960.1 674.8 958.4 673.3 C956.6 671.7 956.0 672.9 956.2 669.9 C956.5 666.8 956.9 667.1 959.2 663.0 C961.5 658.9 960.4 659.8 963.9 656.2 C967.4 652.5 965.1 650.9 970.8 650.9 Z" fill="#000"/><polygon points="909.2,685.4 950.4,715.1 909.2,739.1 870.8,714.1" fill="#e4620e" /><polygon points="926.7,525.2 951.4,537.8 959.1,575.7 954.3,595.1 935.8,609.7 930.0,635.9 925.2,642.7 910.2,649.1 898.0,638.8 891.2,593.2 890.2,583.5 902.8,537.8" fill="#d20008" /><rect x="384" y="1171" width="355" height="487" fill="#1f1f1f"/><rect x="384" y="1474" width="355" height="184" fill="url(#ifloor)"/><rect x="384" y="1474" width="355" height="184" fill="url(#ispec)"/><polygon points="546.1,1623.8 561.6,1632.4 558.1,1659.3 539.2,1659.3" fill="#832b05" /><polygon points="623.7,1637.6 639.2,1633.1 646.1,1659.3 627.1,1659.3" fill="#832b05" /><polygon points="535.7,1462.8 521.9,1466.9 497.8,1491.0 482.3,1518.6 478.8,1542.8 501.2,1537.6 521.2,1530.7 514.3,1573.8 516.8,1597.9 546.1,1623.8 597.8,1641.0 649.5,1623.8 677.1,1594.5 684.7,1566.9 677.1,1537.6 714.3,1551.4 708.1,1532.4 687.4,1501.4 670.2,1480.7 659.9,1470.3 597.8,1456.6" fill="#e9c13b" /><polygon points="478.8,1528.3 503.0,1536.6 478.8,1543.4" fill="#e8d5b0" /><polygon points="695.4,1538.6 713.7,1539.3 714.3,1551.7" fill="#e8d5b0" /><polygon points="546.1,1623.8 597.8,1635.2 649.5,1623.8 625.4,1637.2 597.8,1641.7 563.3,1634.5" fill="#e8d5b0" /><polygon points="541.9,1427.9 547.4,1427.9 547.4,1441.0" fill="#d20008" /><polygon points="541.9,1463.4 534.7,1482.4 539.2,1496.2 570.2,1515.2 604.7,1523.1 639.2,1515.2 659.9,1499.7 666.8,1484.1 659.9,1467.9 604.7,1480.7" fill="#d20008" /><polygon points="563.3,1376.6 590.9,1360.0 621.9,1360.0 643.3,1377.9 656.4,1432.4 658.8,1485.9 637.4,1505.9 604.7,1514.1 571.9,1506.6 543.3,1482.4 546.1,1432.4" fill="#e9c13b" /><polygon points="571.9,1377.9 587.4,1394.5 590.9,1408.3 582.3,1429.0 571.9,1434.1 549.5,1425.5 540.9,1406.6 546.1,1385.9" fill="#e3e3e3" /><polygon points="646.1,1379.7 666.8,1385.9 673.0,1406.6 666.8,1429.0 646.1,1434.8 632.3,1422.1 625.4,1406.6 630.6,1389.3" fill="#e3e3e3" /><polygon points="571.9,1397.9 581.2,1403.1 584.0,1411.0 578.8,1416.9 570.2,1419.3 564.0,1413.4 562.6,1405.5" fill="#000" stroke="#000" stroke-width="2" stroke-linejoin="round"/><polygon points="649.5,1398.6 658.8,1404.1 660.9,1411.7 655.7,1417.9 647.1,1420.0 640.9,1414.1 639.9,1406.2" fill="#000" stroke="#000" stroke-width="2" stroke-linejoin="round"/><polygon points="606.4,1422.1 633.0,1440.0 611.6,1461.7 579.9,1439.3" fill="#e4620e" /><polygon points="601.2,1314.1 617.8,1321.4 623.0,1347.9 617.8,1380.7 614.3,1390.3 604.7,1397.2 597.1,1389.3 590.2,1366.9 581.2,1356.6 580.6,1342.8 585.7,1322.1" fill="#d20008" /><rect x="561.3" y="1171" width="0.9" height="487" fill="#c8841e" opacity="0.5"/><path d="M384 1171.5 H738.5 V1658" stroke="#b89a3a" stroke-width="1.4" fill="none"/><circle cx="923.3" cy="1537.9" r="98.6" fill="#ffffff" fill-opacity="0.1"/><circle cx="930.8" cy="1519.8" r="13.4" fill="#86b4e6" stroke="#2f7de1" stroke-width="1.6"/><line x1="922.8" y1="1490" x2="922.8" y2="1538" stroke="#35c274" stroke-width="4"/><line x1="924" y1="1538.6" x2="970" y2="1539.6" stroke="#f0405f" stroke-width="3.4"/><circle cx="857.5" cy="1535.9" r="13.9" fill="#e08aa6" stroke="#e0396b" stroke-width="1.6"/><circle cx="923" cy="1601.3" r="13.6" fill="#6dc9a0" stroke="#35c274" stroke-width="1.6"/><circle cx="922.8" cy="1474.1" r="19.5" fill="#35c274"/><circle cx="988.7" cy="1540" r="19.5" fill="#e0396b"/><circle cx="915.4" cy="1556.1" r="19.5" fill="#2f7de1"/><line x1="923" y1="1538" x2="917" y2="1548" stroke="#1f8fff" stroke-width="4"/><text x="922.8" y="1481.9" font-family='"Liberation Sans", sans-serif' font-size="22" fill="#1e1e1e" text-anchor="middle">Y</text><text x="988.7" y="1547.9" font-family='"Liberation Sans", sans-serif' font-size="22" fill="#1e1e1e" text-anchor="middle">X</text><text x="915.4" y="1564" font-family='"Liberation Sans", sans-serif' font-size="22" fill="#1e1e1e" text-anchor="middle">Z</text></svg><div class="b " style="left:640px;top:196px;width:350px;height:56px;background:#181818;border:2px solid #2e2e2e;border-radius:9px;box-sizing:border-box;"></div><div class="b " style="left:998px;top:196px;width:208px;height:56px;background:#181818;border:2px solid #2e2e2e;border-radius:9px;box-sizing:border-box;"></div><div class="b " style="left:694px;top:198px;width:2px;height:52px;background:#2e2e2e;"></div><div class="b " style="left:880px;top:198px;width:2px;height:52px;background:#2e2e2e;"></div><div class="b " style="left:934px;top:198px;width:2px;height:52px;background:#2e2e2e;"></div><div class="b " style="left:1096px;top:198px;width:2px;height:52px;background:#2e2e2e;"></div><div class="b " style="left:1150px;top:198px;width:2px;height:52px;background:#2e2e2e;"></div><div class="b " style="left:700px;top:202px;width:44px;height:44px;background:#333333;border-radius:7px;"></div><div class="b " style="left:700px;top:248px;width:44px;height:2px;background:#0078d4;"></div><svg class="b" style="left:650.0px;top:206.0px;" width="36" height="36" viewBox="-18.0 -18.0 36 36" fill="none" stroke="#d6d6d6" stroke-width="1.6" stroke-linecap="round" stroke-linejoin="round"><circle r="12.4"/><ellipse rx="6" ry="12.4"/><path d="M0 -12.4 V12.4 M-11.7 -4 H11.7 M-11.7 4 H11.7"/></svg><svg class="b" style="left:704.0px;top:206.0px;" width="36" height="36" viewBox="-18.0 -18.0 36 36" fill="none" stroke="#d6d6d6" stroke-width="1.6" stroke-linecap="round" stroke-linejoin="round"><path d="M-8.2 -14.6 V10.9 L-2.4 5.7 L1.8 14.6 L6.6 12.3 L2.5 3.7 L10.4 1.7 Z" stroke="#ffffff" stroke-width="1.8" stroke-linejoin="miter"/></svg><svg class="b" style="left:748.0px;top:206.0px;" width="36" height="36" viewBox="-18.0 -18.0 36 36" fill="none" stroke="#d6d6d6" stroke-width="1.6" stroke-linecap="round" stroke-linejoin="round"><path d="M0 -4 V-13.6 M-4.4 -9.2 L0 -13.6 L4.4 -9.2 M0 4 V13.6 M-4.4 9.2 L0 13.6 L4.4 9.2 M-4 0 H-13.6 M-9.2 -4.4 L-13.6 0 L-9.2 4.4 M4 0 H13.6 M9.2 -4.4 L13.6 0 L9.2 4.4"/></svg><svg class="b" style="left:792.5px;top:206.0px;" width="36" height="36" viewBox="-18.0 -18.0 36 36" fill="none" stroke="#d6d6d6" stroke-width="1.6" stroke-linecap="round" stroke-linejoin="round"><path d="M2.3 -10.7 L-13.5 11.2 H13.5"/><path d="M6 -6.6 C10 -3 12.6 2.4 13 7.4" stroke-dasharray="0.1 4.4" stroke-width="2"/></svg><svg class="b" style="left:836.0px;top:206.0px;" width="36" height="36" viewBox="-18.0 -18.0 36 36" fill="none" stroke="#d6d6d6" stroke-width="1.6" stroke-linecap="round" stroke-linejoin="round"><rect x="-13.7" y="-13.8" width="5.8" height="5.8" rx="1.2"/><rect x="-13.7" y="8.0" width="5.8" height="5.8" rx="1.2"/><rect x="7.9" y="-13.8" width="5.8" height="5.8" rx="1.2"/><rect x="7.9" y="8.0" width="5.8" height="5.8" rx="1.2"/><path d="M-7.9 -10.9 H7.9 M-7.9 10.9 H7.9 M-10.8 -8 V8 M10.8 -8 V8"/><rect x="-4.6" y="-4.6" width="4.6" height="4.6" rx="1"/><rect x="0" y="0" width="4.6" height="4.6" rx="1"/></svg><svg class="b" style="left:889.7px;top:206.0px;" width="36" height="36" viewBox="-18.0 -18.0 36 36" fill="none" stroke="#d6d6d6" stroke-width="1.6" stroke-linecap="round" stroke-linejoin="round"><path d="M2.5 -13 A13 13 0 1 1 -9.5 9.6 A15.5 15.5 0 0 0 2.5 -13 Z"/><path d="M-10.6 -15.2 V-10.6 M-12.9 -12.9 H-8.3 M-4 -8.6 V-4 M-6.3 -6.3 H-1.7 M-12.8 -2.3 V2.3 M-15.1 0 H-10.5" stroke-width="1.6"/><circle cx="5.6" cy="0.6" r="1.1" fill="#d6d6d6" stroke="none"/><circle cx="3" cy="5" r="0.9" fill="#d6d6d6" stroke="none"/></svg><svg class="b" style="left:943.0px;top:206.0px;" width="36" height="36" viewBox="-18.0 -18.0 36 36" fill="none" stroke="#d6d6d6" stroke-width="1.6" stroke-linecap="round" stroke-linejoin="round"><path d="M-9.6 -7 H9.6 L14.4 9.6 H-14.4 Z M0 -7 V9.6 M-11.6 0.2 H11.6"/></svg><svg class="b" style="left:1008.0px;top:206.0px;" width="36" height="36" viewBox="-18.0 -18.0 36 36" fill="none" stroke="#d6d6d6" stroke-width="1.6" stroke-linecap="round" stroke-linejoin="round"><path d="M-5.2 -10.4 L-11 -5.5 L-5.4 -0.9 M-11 -5.5 H4.5 A8.25 8.25 0 0 1 4.5 11 H-5.8"/></svg><svg class="b" style="left:1052.5px;top:206.0px;" width="36" height="36" viewBox="-18.0 -18.0 36 36" fill="none" stroke="#d6d6d6" stroke-width="1.6" stroke-linecap="round" stroke-linejoin="round"><path d="M-9.6 -10.2 L10.8 0 L-9.6 10.2 Z" stroke-linejoin="miter"/></svg><svg class="b" style="left:1105.9px;top:206.0px;" width="36" height="36" viewBox="-18.0 -18.0 36 36" fill="none" stroke="#d6d6d6" stroke-width="1.6" stroke-linecap="round" stroke-linejoin="round"><path d="M-2.78 -10.23 L-2.22 -14.03 L2.22 -14.03 L2.78 -10.23 L5.27 -9.20 L8.35 -11.49 L11.49 -8.35 L9.20 -5.27 L10.23 -2.78 L14.03 -2.22 L14.03 2.22 L10.23 2.78 L9.20 5.27 L11.49 8.35 L8.35 11.49 L5.27 9.20 L2.78 10.23 L2.22 14.03 L-2.22 14.03 L-2.78 10.23 L-5.27 9.20 L-8.35 11.49 L-11.49 8.35 L-9.20 5.27 L-10.23 2.78 L-14.03 2.22 L-14.03 -2.22 L-10.23 -2.78 L-9.20 -5.27 L-11.49 -8.35 L-8.35 -11.49 L-5.27 -9.20 Z"/><circle r="4.9"/></svg><svg class="b" style="left:1160.0px;top:206.0px;" width="36" height="36" viewBox="-18.0 -18.0 36 36" fill="none" stroke="#d6d6d6" stroke-width="1.6" stroke-linecap="round" stroke-linejoin="round"><circle r="13.5"/><path d="M-4.3 -3.6 C-4.3 -8.4 4.6 -8.4 4.6 -3.6 C4.6 -0.2 0.2 0 0.2 3.4"/><circle cx="0.2" cy="7.6" r="1.1" fill="#d6d6d6" stroke="none"/></svg><div class="b" style="left:0;top:184px;width:384px;height:1474px;overflow:hidden;"><div class="b" style="left:0;top:-184px;"><div class="b " style="left:0px;top:184px;width:382px;height:1474px;background:#1f1f1f;"></div><div class="b " style="left:382px;top:184px;width:2px;height:1474px;background:#2b2b2b;"></div><div class="b " style="left:12px;top:196px;width:52px;height:52px;background:#2d2d2d;border-radius:7px;"></div><svg class="b" style="left:24px;top:208px;" width="28" height="30" viewBox="0 0 28 30" fill="none"><path d="M14 2.5 L26 9.2 L14 16 L2 9.2 Z" stroke="#dddddd" stroke-width="1.9" stroke-linejoin="round"/><path d="M2 15.4 L14 22.2 L26 15.4 M2 21.4 L14 28.2 L26 21.4" stroke="#dddddd" stroke-width="1.9" stroke-linejoin="round"/></svg><div class="b " style="left:72px;top:196px;width:178px;height:52px;background:#313131;border:2px solid #3c3c3c;border-radius:5px;box-sizing:border-box;"></div><div class="t " style="left:94.7px;top:206.0px;font-size:26px;line-height:34px;color:#cccccc;letter-spacing:0.053px;">Scene</div><svg class="b" style="left:223px;top:215.5px;" width="20" height="12" viewBox="0 0 20 12" fill="none"><path d="M1.5 1.5 L10.0 9.5 L18.5 1.5" stroke="#cccccc" stroke-width="1.8"/></svg><svg class="b" style="left:270px;top:206px;" width="32" height="32" viewBox="0 0 32 32" fill="none"><path d="M14 5 H6.5 Q3.5 5 3.5 8 V25.5 Q3.5 28.5 6.5 28.5 H24 Q27 28.5 27 25.5 V16" stroke="#cccccc" stroke-width="2"/><path d="M24.6 2.6 L29.4 7.4 L16 20.6 L10.6 21.6 L11.6 16.2 Z" stroke="#cccccc" stroke-width="2" stroke-linejoin="round"/></svg><svg class="b" style="left:330px;top:209px;" width="28" height="28" viewBox="0 0 28 28" fill="none"><circle cx="11.6" cy="11.6" r="9" stroke="#cccccc" stroke-width="2"/><path d="M18.2 18.2 L25.8 25.6" stroke="#cccccc" stroke-width="2.2"/></svg><div class="t " style="left:61.3px;top:265.0px;font-size:26px;line-height:34px;color:#cccccc;letter-spacing:0.342px;">Fragment</div><div class="t " style="left:84.6px;top:308.0px;font-size:26px;line-height:34px;color:#cccccc;letter-spacing:0.375px;">CameraEntity</div><svg class="b" style="left:52px;top:314px;" width="13" height="22" viewBox="0 0 13 22" fill="none"><path d="M2 2 L10.6 11 L2 20" stroke="#cccccc" stroke-width="1.8"/></svg><div class="t " style="left:84.6px;top:351.0px;font-size:26px;line-height:34px;color:#cccccc;letter-spacing:0.305px;">PlayerEntity</div><svg class="b" style="left:52px;top:357px;" width="13" height="22" viewBox="0 0 13 22" fill="none"><path d="M2 2 L10.6 11 L2 20" stroke="#cccccc" stroke-width="1.8"/></svg><div class="b " style="left:0px;top:389px;width:382px;height:43px;background:#37373d;"></div><div class="t " style="left:84.6px;top:394.0px;font-size:26px;line-height:34px;color:#cccccc;letter-spacing:0.423px;">PerspectiveCamera</div><div class="t " style="left:84.6px;top:437.0px;font-size:26px;line-height:34px;color:#cccccc;letter-spacing:0.230px;">mesh</div><div class="t " style="left:108.6px;top:480.0px;font-size:26px;line-height:34px;color:#cccccc;letter-spacing:0.538px;">boxGeometry</div><div class="t " style="left:108.6px;top:523.0px;font-size:26px;line-height:34px;color:#cccccc;letter-spacing:0.301px;">meshStandardMa...</div><div class="t " style="left:84.6px;top:566.0px;font-size:26px;line-height:34px;color:#cccccc;letter-spacing:0.893px;">pointLight</div><div class="t " style="left:84.6px;top:609.0px;font-size:26px;line-height:34px;color:#cccccc;letter-spacing:0.759px;">ambientLight</div><div class="b " style="left:0px;top:959px;width:382px;height:2px;background:#2b2b2b;"></div><div class="b " style="left:12px;top:973px;width:358px;height:52px;background:#313131;border:2px solid #3c3c3c;border-radius:5px;box-sizing:border-box;"></div><div class="t " style="left:32.8px;top:983.0px;font-size:26px;line-height:34px;color:#989898;letter-spacing:0.459px;">Filter props...</div><svg class="b" style="left:18px;top:1060.5px;" width="20" height="12" viewBox="0 0 20 12" fill="none"><path d="M1.5 1.5 L10.0 9.5 L18.5 1.5" stroke="#cccccc" stroke-width="1.8"/></svg><div class="t " style="left:46.5px;top:1050.7px;font-size:22px;line-height:29px;color:#cccccc;letter-spacing:0.162px;font-weight:700;">CONSTRUCTOR</div><div class="t " style="left:20.7px;top:1092.6px;font-size:26px;line-height:34px;color:#cccccc;letter-spacing:0.105px;">args</div><div class="b " style="left:20px;top:1129px;width:342px;height:52px;background:#313131;border:2px solid #3c3c3c;border-radius:5px;box-sizing:border-box;"></div><div class="t " style="left:40.7px;top:1138.3px;font-size:26px;line-height:34px;color:#989898;letter-spacing:0.617px;">fov (number)</div><div class="b " style="left:20px;top:1189px;width:342px;height:52px;background:#313131;border:2px solid #3c3c3c;border-radius:5px;box-sizing:border-box;"></div><div class="t " style="left:40.7px;top:1198.3px;font-size:26px;line-height:34px;color:#989898;letter-spacing:0.646px;">aspect (number)</div><div class="b " style="left:20px;top:1249px;width:342px;height:52px;background:#313131;border:2px solid #3c3c3c;border-radius:5px;box-sizing:border-box;"></div><div class="t " style="left:40.7px;top:1258.3px;font-size:26px;line-height:34px;color:#989898;letter-spacing:0.459px;">near (number)</div><div class="b " style="left:20px;top:1309px;width:342px;height:52px;background:#313131;border:2px solid #3c3c3c;border-radius:5px;box-sizing:border-box;"></div><div class="t " style="left:40.7px;top:1318.3px;font-size:26px;line-height:34px;color:#989898;letter-spacing:0.579px;">far (number)</div><div class="t " style="left:20.7px;top:1379.3px;font-size:26px;line-height:34px;color:#cccccc;letter-spacing:0.662px;">attach</div><div class="b " style="left:20px;top:1416px;width:342px;height:52px;background:#313131;border:2px solid #3c3c3c;border-radius:5px;box-sizing:border-box;"></div><div class="t " style="left:40.7px;top:1426.0px;font-size:26px;line-height:34px;color:#989898;letter-spacing:0.737px;">string</div><div class="t " style="left:20.7px;top:1486.9px;font-size:26px;line-height:34px;color:#cccccc;letter-spacing:-0.012px;font-style:italic;">name</div><div class="b " style="left:20px;top:1523px;width:342px;height:52px;background:#313131;border:2px solid #3c3c3c;border-radius:5px;box-sizing:border-box;"></div><div class="t " style="left:40.7px;top:1533.2px;font-size:26px;line-height:34px;color:#989898;letter-spacing:0.737px;">string</div><svg class="b" style="left:18px;top:1606.5px;" width="20" height="12" viewBox="0 0 20 12" fill="none"><path d="M1.5 1.5 L10.0 9.5 L18.5 1.5" stroke="#cccccc" stroke-width="1.8"/></svg><div class="t " style="left:47.0px;top:1596.7px;font-size:22px;line-height:29px;color:#cccccc;letter-spacing:0.050px;font-weight:700;">TRANSFORM</div><div class="t " style="left:20.7px;top:1638.6px;font-size:26px;line-height:34px;color:#cccccc;letter-spacing:0.547px;font-style:italic;">position</div></div></div><div class="b " style="left:1464px;top:184px;width:1464px;height:1474px;background:#1f1f1f;"></div><div class="b" style="left:1464px;top:184px;width:1284px;height:1474px;overflow:hidden;"><div class="b" style="left:-1464px;top:-184px;"><div class="b " style="left:1606.5px;top:1635px;width:969.0px;height:44px;background:#38383d;"></div><div class="b " style="left:1606.4px;top:335px;width:1.7px;height:42px;background:#454545;"></div><div class="b " style="left:1606.4px;top:377px;width:1.7px;height:42px;background:#454545;"></div><div class="b " style="left:1606.4px;top:419px;width:1.7px;height:42px;background:#454545;"></div><div class="b " style="left:1606.4px;top:461px;width:1.7px;height:42px;background:#454545;"></div><div class="b " style="left:1640.1px;top:461px;width:1.7px;height:42px;background:#454545;"></div><div class="b " style="left:1606.4px;top:503px;width:1.7px;height:42px;background:#454545;"></div><div class="b " style="left:1640.1px;top:503px;width:1.7px;height:42px;background:#454545;"></div><div class="b " style="left:1673.8px;top:503px;width:1.7px;height:42px;background:#454545;"></div><div class="b " style="left:1606.4px;top:545px;width:1.7px;height:42px;background:#454545;"></div><div class="b " style="left:1640.1px;top:545px;width:1.7px;height:42px;background:#454545;"></div><div class="b " style="left:1673.8px;top:545px;width:1.7px;height:42px;background:#454545;"></div><div class="b " style="left:1707.5px;top:545px;width:1.7px;height:42px;background:#454545;"></div><div class="b " style="left:1606.4px;top:587px;width:1.7px;height:42px;background:#454545;"></div><div class="b " style="left:1640.1px;top:587px;width:1.7px;height:42px;background:#454545;"></div><div class="b " style="left:1673.8px;top:587px;width:1.7px;height:42px;background:#454545;"></div><div class="b " style="left:1707.5px;top:587px;width:1.7px;height:42px;background:#454545;"></div><div class="b " style="left:1606.4px;top:629px;width:1.7px;height:42px;background:#454545;"></div><div class="b " style="left:1640.1px;top:629px;width:1.7px;height:42px;background:#454545;"></div><div class="b " style="left:1673.8px;top:629px;width:1.7px;height:42px;background:#454545;"></div><div class="b " style="left:1707.5px;top:629px;width:1.7px;height:42px;background:#454545;"></div><div class="b " style="left:1741.2px;top:629px;width:1.7px;height:42px;background:#454545;"></div><div class="b " style="left:1606.4px;top:671px;width:1.7px;height:42px;background:#454545;"></div><div class="b " style="left:1640.1px;top:671px;width:1.7px;height:42px;background:#454545;"></div><div class="b " style="left:1673.8px;top:671px;width:1.7px;height:42px;background:#454545;"></div><div class="b " style="left:1707.5px;top:671px;width:1.7px;height:42px;background:#454545;"></div><div class="b " style="left:1741.2px;top:671px;width:1.7px;height:42px;background:#454545;"></div><div class="b " style="left:1606.4px;top:713px;width:1.7px;height:42px;background:#454545;"></div><div class="b " style="left:1640.1px;top:713px;width:1.7px;height:42px;background:#454545;"></div><div class="b " style="left:1673.8px;top:713px;width:1.7px;height:42px;background:#454545;"></div><div class="b " style="left:1707.5px;top:713px;width:1.7px;height:42px;background:#454545;"></div><div class="b " style="left:1606.4px;top:755px;width:1.7px;height:42px;background:#454545;"></div><div class="b " style="left:1640.1px;top:755px;width:1.7px;height:42px;background:#454545;"></div><div class="b " style="left:1673.8px;top:755px;width:1.7px;height:42px;background:#454545;"></div><div class="b " style="left:1606.4px;top:797px;width:1.7px;height:42px;background:#454545;"></div><div class="b " style="left:1640.1px;top:797px;width:1.7px;height:42px;background:#454545;"></div><div class="b " style="left:1673.8px;top:797px;width:1.7px;height:42px;background:#454545;"></div><div class="b " style="left:1606.4px;top:839px;width:1.7px;height:42px;background:#454545;"></div><div class="b " style="left:1640.1px;top:839px;width:1.7px;height:42px;background:#454545;"></div><div class="b " style="left:1673.8px;top:839px;width:1.7px;height:42px;background:#454545;"></div><div class="b " style="left:1606.4px;top:881px;width:1.7px;height:42px;background:#454545;"></div><div class="b " style="left:1640.1px;top:881px;width:1.7px;height:42px;background:#454545;"></div><div class="b " style="left:1673.8px;top:881px;width:1.7px;height:42px;background:#454545;"></div><div class="b " style="left:1606.4px;top:923px;width:1.7px;height:42px;background:#454545;"></div><div class="b " style="left:1640.1px;top:923px;width:1.7px;height:42px;background:#454545;"></div><div class="b " style="left:1673.8px;top:923px;width:1.7px;height:42px;background:#454545;"></div><div class="b " style="left:1606.4px;top:965px;width:1.7px;height:42px;background:#454545;"></div><div class="b " style="left:1640.1px;top:965px;width:1.7px;height:42px;background:#454545;"></div><div class="b " style="left:1673.8px;top:965px;width:1.7px;height:42px;background:#454545;"></div><div class="b " style="left:1707.5px;top:965px;width:1.7px;height:42px;background:#454545;"></div><div class="b " style="left:1606.4px;top:1007px;width:1.7px;height:42px;background:#454545;"></div><div class="b " style="left:1640.1px;top:1007px;width:1.7px;height:42px;background:#454545;"></div><div class="b " style="left:1673.8px;top:1007px;width:1.7px;height:42px;background:#454545;"></div><div class="b " style="left:1707.5px;top:1007px;width:1.7px;height:42px;background:#454545;"></div><div class="b " style="left:1606.4px;top:1049px;width:1.7px;height:42px;background:#454545;"></div><div class="b " style="left:1640.1px;top:1049px;width:1.7px;height:42px;background:#454545;"></div><div class="b " style="left:1673.8px;top:1049px;width:1.7px;height:42px;background:#454545;"></div><div class="b " style="left:1707.5px;top:1049px;width:1.7px;height:42px;background:#454545;"></div><div class="b " style="left:1741.2px;top:1049px;width:1.7px;height:42px;background:#454545;"></div><div class="b " style="left:1606.4px;top:1091px;width:1.7px;height:42px;background:#454545;"></div><div class="b " style="left:1640.1px;top:1091px;width:1.7px;height:42px;background:#454545;"></div><div class="b " style="left:1673.8px;top:1091px;width:1.7px;height:42px;background:#454545;"></div><div class="b " style="left:1707.5px;top:1091px;width:1.7px;height:42px;background:#454545;"></div><div class="b " style="left:1741.2px;top:1091px;width:1.7px;height:42px;background:#454545;"></div><div class="b " style="left:1606.4px;top:1133px;width:1.7px;height:42px;background:#454545;"></div><div class="b " style="left:1640.1px;top:1133px;width:1.7px;height:42px;background:#454545;"></div><div class="b " style="left:1673.8px;top:1133px;width:1.7px;height:42px;background:#454545;"></div><div class="b " style="left:1707.5px;top:1133px;width:1.7px;height:42px;background:#454545;"></div><div class="b " style="left:1606.4px;top:1175px;width:1.7px;height:42px;background:#454545;"></div><div class="b " style="left:1640.1px;top:1175px;width:1.7px;height:42px;background:#454545;"></div><div class="b " style="left:1673.8px;top:1175px;width:1.7px;height:42px;background:#454545;"></div><div class="b " style="left:1707.5px;top:1175px;width:1.7px;height:42px;background:#454545;"></div><div class="b " style="left:1606.4px;top:1217px;width:1.7px;height:42px;background:#454545;"></div><div class="b " style="left:1640.1px;top:1217px;width:1.7px;height:42px;background:#454545;"></div><div class="b " style="left:1673.8px;top:1217px;width:1.7px;height:42px;background:#454545;"></div><div class="b " style="left:1606.4px;top:1259px;width:1.7px;height:42px;background:#454545;"></div><div class="b " style="left:1640.1px;top:1259px;width:1.7px;height:42px;background:#454545;"></div><div class="b " style="left:1673.8px;top:1259px;width:1.7px;height:42px;background:#454545;"></div><div class="b " style="left:1606.4px;top:1301px;width:1.7px;height:42px;background:#454545;"></div><div class="b " style="left:1640.1px;top:1301px;width:1.7px;height:42px;background:#454545;"></div><div class="b " style="left:1673.8px;top:1301px;width:1.7px;height:42px;background:#454545;"></div><div class="b " style="left:1606.4px;top:1343px;width:1.7px;height:42px;background:#454545;"></div><div class="b " style="left:1640.1px;top:1343px;width:1.7px;height:42px;background:#454545;"></div><div class="b " style="left:1673.8px;top:1343px;width:1.7px;height:42px;background:#454545;"></div><div class="b " style="left:1707.5px;top:1343px;width:1.7px;height:42px;background:#454545;"></div><div class="b " style="left:1606.4px;top:1385px;width:1.7px;height:42px;background:#454545;"></div><div class="b " style="left:1640.1px;top:1385px;width:1.7px;height:42px;background:#454545;"></div><div class="b " style="left:1673.8px;top:1385px;width:1.7px;height:42px;background:#454545;"></div><div class="b " style="left:1707.5px;top:1385px;width:1.7px;height:42px;background:#454545;"></div><div class="b " style="left:1606.4px;top:1427px;width:1.7px;height:42px;background:#454545;"></div><div class="b " style="left:1640.1px;top:1427px;width:1.7px;height:42px;background:#454545;"></div><div class="b " style="left:1673.8px;top:1427px;width:1.7px;height:42px;background:#454545;"></div><div class="b " style="left:1606.4px;top:1469px;width:1.7px;height:42px;background:#454545;"></div><div class="b " style="left:1640.1px;top:1469px;width:1.7px;height:42px;background:#454545;"></div><div class="b " style="left:1673.8px;top:1469px;width:1.7px;height:42px;background:#454545;"></div><div class="b " style="left:1707.5px;top:1469px;width:1.7px;height:42px;background:#454545;"></div><div class="b " style="left:1606.4px;top:1511px;width:1.7px;height:42px;background:#454545;"></div><div class="b " style="left:1640.1px;top:1511px;width:1.7px;height:42px;background:#454545;"></div><div class="b " style="left:1673.8px;top:1511px;width:1.7px;height:42px;background:#454545;"></div><div class="b " style="left:1707.5px;top:1511px;width:1.7px;height:42px;background:#454545;"></div><div class="b " style="left:1606.4px;top:1553px;width:1.7px;height:42px;background:#454545;"></div><div class="b " style="left:1640.1px;top:1553px;width:1.7px;height:42px;background:#454545;"></div><div class="b " style="left:1673.8px;top:1553px;width:1.7px;height:42px;background:#454545;"></div><div class="b " style="left:1606.4px;top:1595px;width:1.7px;height:42px;background:#454545;"></div><div class="b " style="left:1640.1px;top:1595px;width:1.7px;height:42px;background:#454545;"></div><div class="b " style="left:1673.8px;top:1595px;width:1.7px;height:42px;background:#454545;"></div><div class="b " style="left:1606.4px;top:1637px;width:1.7px;height:42px;background:#454545;"></div><div class="b " style="left:1640.1px;top:1637px;width:1.7px;height:42px;background:#454545;"></div><div class="b " style="left:1673.8px;top:1637px;width:1.7px;height:42px;background:#454545;"></div><div class="b " style="left:1707.5px;top:1637px;width:1.7px;height:42px;background:#454545;"></div><div class="ln" style="top:173px;">10</div><div class="cl" style="top:173px;"><span style="color:#c586c0">import</span> <span style="color:#ffd700">{</span><span style="color:#9cdcfe"> PlayerEntity </span><span style="color:#ffd700">}</span><span style="color:#c586c0"> from </span><span style="color:#ce9178">"../entities/player-entity"</span><span style="color:#d4d4d4">;</span></div><div class="ln" style="top:215px;">11</div><div class="ln" style="top:293px;">12</div><div class="cl" style="top:293px;"><span style="color:#c586c0">export</span> <span style="color:#569cd6">function</span> <span style="color:#dcdcaa">Scene</span><span style="color:#ffd700">()</span> <span style="color:#ffd700">{</span></div><div class="ln" style="top:335px;">13</div><div class="cl" style="top:335px;">  <span style="color:#dcdcaa">useCamera</span><span style="color:#da70d6">()</span><span style="color:#d4d4d4">;</span></div><div class="ln" style="top:377px;">14</div><div class="ln" style="top:419px;">15</div><div class="cl" style="top:419px;">  <span style="color:#c586c0">return</span> <span style="color:#da70d6">(</span></div><div class="ln" style="top:461px;">16</div><div class="cl" style="top:461px;">    <span style="color:#808080">&lt;&gt;</span></div><div class="ln" style="top:503px;">17</div><div class="cl" style="top:503px;">      <span style="color:#808080">&lt;</span><span style="color:#4ec9b0">CameraEntity</span></div><div class="ln" style="top:545px;">18</div><div class="cl" style="top:545px;">        <span style="color:#9cdcfe">offset</span><span style="color:#d4d4d4">=</span><span style="color:#179fff">{</span><span style="color:#ffd700">[</span><span style="color:#d4d4d4">-</span><span style="color:#b5cea8">4.25</span><span style="color:#d4d4d4">,</span> <span style="color:#b5cea8">5</span><span style="color:#d4d4d4">,</span> <span style="color:#b5cea8">5.5</span><span style="color:#ffd700">]</span><span style="color:#179fff">}</span></div><div class="ln" style="top:587px;">19</div><div class="cl" style="top:587px;">        <span style="color:#9cdcfe">rotation</span><span style="color:#d4d4d4">=</span><span style="color:#179fff">{</span><span style="color:#ffd700">[</span></div><div class="ln" style="top:629px;">20</div><div class="cl" style="top:629px;">          <span style="color:#d4d4d4">-</span><span style="color:#b5cea8">0.680_678_408_277_788_5</span><span style="color:#d4d4d4">,</span> <span style="color:#d4d4d4">-</span><span style="color:#b5cea8">0.541_052_068_118_242_1</span><span style="color:#d4d4d4">,</span></div><div class="ln" style="top:671px;">21</div><div class="cl" style="top:671px;">          <span style="color:#d4d4d4">-</span><span style="color:#b5cea8">0.401_425_727_958_695_8</span><span style="color:#d4d4d4">,</span></div><div class="ln" style="top:713px;">22</div><div class="cl" style="top:713px;">        <span style="color:#ffd700">]</span><span style="color:#179fff">}</span></div><div class="ln" style="top:755px;">23</div><div class="cl" style="top:755px;">      <span style="color:#808080">/&gt;</span></div><div class="ln" style="top:797px;">24</div><div class="ln" style="top:839px;">25</div><div class="cl" style="top:839px;">      <span style="color:#808080">&lt;</span><span style="color:#4ec9b0">PlayerEntity</span> <span style="color:#9cdcfe">position</span><span style="color:#d4d4d4">=</span><span style="color:#179fff">{</span><span style="color:#ffd700">[</span><span style="color:#b5cea8">0</span><span style="color:#d4d4d4">,</span> <span style="color:#b5cea8">0</span><span style="color:#d4d4d4">,</span> <span style="color:#b5cea8">0</span><span style="color:#ffd700">]</span><span style="color:#179fff">}</span> <span style="color:#808080">/&gt;</span></div><div class="ln" style="top:881px;">26</div><div class="ln" style="top:923px;">27</div><div class="cl" style="top:923px;">      <span style="color:#808080">&lt;</span><span style="color:#4ec9b0">PerspectiveCamera</span></div><div class="ln" style="top:965px;">28</div><div class="cl" style="top:965px;">        <span style="color:#9cdcfe">makeDefault</span><span style="color:#d4d4d4">=</span><span style="color:#179fff">{</span><span style="color:#569cd6">true</span><span style="color:#179fff">}</span></div><div class="ln" style="top:1007px;">29</div><div class="cl" style="top:1007px;">        <span style="color:#9cdcfe">position</span><span style="color:#d4d4d4">=</span><span style="color:#179fff">{</span><span style="color:#ffd700">[</span></div><div class="ln" style="top:1049px;">30</div><div class="cl" style="top:1049px;">          <span style="color:#d4d4d4">-</span><span style="color:#b5cea8">0.141_646_936_469_016_94</span><span style="color:#d4d4d4">,</span> <span style="color:#b5cea8">1.732_122_037_827_79</span><span style="color:#d4d4d4">,</span></div><div class="ln" style="top:1091px;">31</div><div class="cl" style="top:1091px;">          <span style="color:#b5cea8">2.068_985_775_667_036</span><span style="color:#d4d4d4">,</span></div><div class="ln" style="top:1133px;">32</div><div class="cl" style="top:1133px;">        <span style="color:#ffd700">]</span><span style="color:#179fff">}</span></div><div class="ln" style="top:1175px;">33</div><div class="cl" style="top:1175px;">        <span style="color:#9cdcfe">rotation</span><span style="color:#d4d4d4">=</span><span style="color:#179fff">{</span><span style="color:#ffd700">[</span><span style="color:#d4d4d4">-</span><span style="color:#b5cea8">0.249_804_765_644_363_16</span><span style="color:#d4d4d4">,</span> <span style="color:#b5cea8">0</span><span style="color:#d4d4d4">,</span> <span style="color:#b5cea8">0</span><span style="color:#ffd700">]</span><span style="color:#179fff">}</span></div><div class="ln" style="top:1217px;">34</div><div class="cl" style="top:1217px;">      <span style="color:#808080">/&gt;</span></div><div class="ln" style="top:1259px;">35</div><div class="ln" style="top:1301px;">36</div><div class="cl" style="top:1301px;">      <span style="color:#808080">&lt;</span><span style="color:#569cd6">mesh</span></div><div class="ln" style="top:1343px;">37</div><div class="cl" style="top:1343px;">        <span style="color:#9cdcfe">position</span><span style="color:#d4d4d4">=</span><span style="color:#179fff">{</span><span style="color:#ffd700">[</span><span style="color:#d4d4d4">-</span><span style="color:#b5cea8">0.061_427_483_068_584_81</span><span style="color:#d4d4d4">,</span> <span style="color:#d4d4d4">-</span><span style="color:#b5cea8">0.104_989_602_568_576_5</span><span style="color:#d4d4d4">,</span> <span style="color:#b5cea8">0.538_270_938_224_1</span><span style="color:#ffd700">]</span><span style="color:#179fff">}</span></div><div class="ln" style="top:1385px;">38</div><div class="cl" style="top:1385px;">        <span style="color:#9cdcfe">receiveShadow</span><span style="color:#d4d4d4">=</span><span style="color:#179fff">{</span><span style="color:#569cd6">true</span><span style="color:#179fff">}</span></div><div class="ln" style="top:1427px;">39</div><div class="cl" style="top:1427px;">      <span style="color:#808080">&gt;</span></div><div class="ln" style="top:1469px;">40</div><div class="cl" style="top:1469px;">        <span style="color:#808080">&lt;</span><span style="color:#4ec9b0">boxGeometry</span> <span style="color:#9cdcfe">args</span><span style="color:#d4d4d4">=</span><span style="color:#179fff">{</span><span style="color:#ffd700">[</span><span style="color:#b5cea8">10</span><span style="color:#d4d4d4">,</span> <span style="color:#b5cea8">0.2</span><span style="color:#d4d4d4">,</span> <span style="color:#b5cea8">5</span><span style="color:#ffd700">]</span><span style="color:#179fff">}</span> <span style="color:#808080">/&gt;</span></div><div class="ln" style="top:1511px;">41</div><div class="cl" style="top:1511px;">        <span style="color:#808080">&lt;</span><span style="color:#4ec9b0">meshStandardMaterial</span> <span style="color:#808080">/&gt;</span></div><div class="ln" style="top:1553px;">42</div><div class="cl" style="top:1553px;">      <span style="color:#808080">&lt;/</span><span style="color:#569cd6">mesh</span><span style="color:#808080">&gt;</span></div><div class="ln" style="top:1595px;">43</div><div class="cl" style="top:1595px;">      <span style="color:#808080">&lt;</span><span style="color:#4ec9b0">pointLight</span></div><div class="ln" style="top:1637px;">44</div><div class="cl" style="top:1637px;">        <span style="color:#9cdcfe">castShadow</span><span style="color:#d4d4d4">=</span><span style="color:#179fff">{</span><span style="color:#569cd6">true</span><span style="color:#179fff">}</span></div><div class="t " style="left:1606.7px;top:258.5px;font-size:25px;line-height:32px;color:#999999;letter-spacing:-0.009px;">Open in Triplex</div></div></div><div class="b " style="left:1464px;top:184px;width:1464px;height:10px;background:linear-gradient(#000000aa,#00000000);"></div><div class="b " style="left:2748px;top:184px;width:6px;height:1474px;background:linear-gradient(90deg,#00000000,#00000055);"></div><div class="b " style="left:2754px;top:184px;width:174px;height:1474px;background:#1f1f1f;"></div><svg class="b" style="left:2756px;top:184px;" width="146" height="360" viewBox="0 0 146 360" fill="none"><rect x="0.0" y="0" width="6.1" height="4" fill="#384731"/><rect x="0" y="5" width="146" height="6" fill="#2a5a8c"/><rect x="76" y="5" width="14" height="6" fill="#2b8cff"/><rect x="2.0" y="6" width="2.0" height="4" fill="#50806b"/><rect x="6.1" y="6" width="18.4" height="4" fill="#50806b"/><rect x="26.5" y="6" width="6.1" height="4" fill="#50806b"/><rect x="34.7" y="6" width="24.5" height="4" fill="#50806b"/><rect x="61.2" y="6" width="14.3" height="4" fill="#50806b"/><rect x="77.5" y="6" width="16.3" height="4" fill="#50806b"/><rect x="95.9" y="6" width="6.1" height="4" fill="#50806b"/><rect x="104.0" y="6" width="12.2" height="4" fill="#50806b"/><rect x="118.3" y="6" width="18.4" height="4" fill="#50806b"/><rect x="2.0" y="12" width="2.0" height="4" fill="#384731"/><rect x="2.0" y="18" width="2.0" height="4" fill="#384731"/><rect x="6.1" y="18" width="8.2" height="4" fill="#384731"/><rect x="16.3" y="18" width="20.4" height="4" fill="#384731"/><rect x="38.8" y="18" width="16.3" height="4" fill="#384731"/><rect x="57.1" y="18" width="16.3" height="4" fill="#384731"/><rect x="75.5" y="18" width="16.3" height="4" fill="#384731"/><rect x="93.8" y="18" width="12.2" height="4" fill="#384731"/><rect x="108.1" y="18" width="18.4" height="4" fill="#384731"/><rect x="128.5" y="18" width="17.5" height="4" fill="#384731"/><rect x="2.0" y="24" width="2.0" height="4" fill="#384731"/><rect x="6.1" y="24" width="6.1" height="4" fill="#384731"/><rect x="14.3" y="24" width="8.2" height="4" fill="#384731"/><rect x="24.5" y="24" width="10.2" height="4" fill="#384731"/><rect x="36.7" y="24" width="14.3" height="4" fill="#384731"/><rect x="53.0" y="24" width="8.2" height="4" fill="#384731"/><rect x="63.2" y="24" width="6.1" height="4" fill="#384731"/><rect x="71.4" y="24" width="14.3" height="4" fill="#384731"/><rect x="87.7" y="24" width="14.3" height="4" fill="#384731"/><rect x="104.0" y="24" width="8.2" height="4" fill="#384731"/><rect x="114.2" y="24" width="4.1" height="4" fill="#384731"/><rect x="120.4" y="24" width="6.1" height="4" fill="#384731"/><rect x="128.5" y="24" width="12.2" height="4" fill="#384731"/><rect x="142.8" y="24" width="3.2" height="4" fill="#384731"/><rect x="2.0" y="30" width="4.1" height="4" fill="#384731"/><rect x="0" y="35" width="146" height="6" fill="#2a5a8c"/><rect x="96" y="35" width="8" height="6" fill="#2b8cff"/><rect x="0.0" y="36" width="12.2" height="4" fill="#8774ab"/><rect x="14.3" y="36" width="2.0" height="4" fill="#aaa538"/><rect x="18.4" y="36" width="34.7" height="4" fill="#6ea8d0"/><rect x="55.1" y="36" width="2.0" height="4" fill="#aaa538"/><rect x="59.2" y="36" width="8.2" height="4" fill="#8774ab"/><rect x="69.4" y="36" width="38.8" height="4" fill="#8c7b80"/><rect x="108.1" y="36" width="2.0" height="4" fill="#90a3b7"/><rect x="0.0" y="42" width="12.2" height="4" fill="#7a5878"/><rect x="14.3" y="42" width="2.0" height="4" fill="#5e5316"/><rect x="18.4" y="42" width="18.4" height="4" fill="#64879a"/><rect x="38.8" y="42" width="2.0" height="4" fill="#5e5316"/><rect x="42.8" y="42" width="8.2" height="4" fill="#7a5878"/><rect x="53.0" y="42" width="46.9" height="4" fill="#7f5e50"/><rect x="100.0" y="42" width="2.0" height="4" fill="#676767"/><rect x="0.0" y="48" width="12.2" height="4" fill="#7a5878"/><rect x="14.3" y="48" width="2.0" height="4" fill="#5e5316"/><rect x="18.4" y="48" width="24.5" height="4" fill="#64879a"/><rect x="44.9" y="48" width="2.0" height="4" fill="#5e5316"/><rect x="49.0" y="48" width="8.2" height="4" fill="#7a5878"/><rect x="59.2" y="48" width="55.1" height="4" fill="#7f5e50"/><rect x="114.2" y="48" width="2.0" height="4" fill="#676767"/><rect x="0.0" y="54" width="12.2" height="4" fill="#7a5878"/><rect x="14.3" y="54" width="2.0" height="4" fill="#5e5316"/><rect x="18.4" y="54" width="24.5" height="4" fill="#64879a"/><rect x="44.9" y="54" width="2.0" height="4" fill="#5e5316"/><rect x="49.0" y="54" width="8.2" height="4" fill="#7a5878"/><rect x="59.2" y="54" width="55.1" height="4" fill="#7f5e50"/><rect x="114.2" y="54" width="2.0" height="4" fill="#676767"/><rect x="0.0" y="66" width="12.2" height="4" fill="#7a5878"/><rect x="14.3" y="66" width="16.3" height="4" fill="#3d6484"/><rect x="32.6" y="66" width="10.2" height="4" fill="#87876b"/><rect x="42.8" y="66" width="4.1" height="4" fill="#5e5316"/><rect x="49.0" y="66" width="2.0" height="4" fill="#5e5316"/><rect x="4.1" y="72" width="18.4" height="4" fill="#87876b"/><rect x="22.4" y="72" width="4.1" height="4" fill="#533652"/><rect x="26.5" y="72" width="2.0" height="4" fill="#676767"/><rect x="4.1" y="84" width="12.2" height="4" fill="#7a5878"/><rect x="18.4" y="84" width="2.0" height="4" fill="#533652"/><rect x="8.2" y="90" width="4.1" height="4" fill="#545454"/><rect x="12.2" y="96" width="2.0" height="4" fill="#545454"/><rect x="14.3" y="96" width="24.5" height="4" fill="#397d6f"/><rect x="16.3" y="102" width="12.2" height="4" fill="#64879a"/><rect x="28.6" y="102" width="2.0" height="4" fill="#676767"/><rect x="30.6" y="102" width="2.0" height="4" fill="#1d435e"/><rect x="32.6" y="102" width="2.0" height="4" fill="#5e5316"/><rect x="34.7" y="102" width="2.0" height="4" fill="#676767"/><rect x="36.7" y="102" width="8.2" height="4" fill="#727f6a"/><rect x="44.9" y="102" width="2.0" height="4" fill="#676767"/><rect x="49.0" y="102" width="2.0" height="4" fill="#727f6a"/><rect x="51.0" y="102" width="2.0" height="4" fill="#676767"/><rect x="55.1" y="102" width="6.1" height="4" fill="#727f6a"/><rect x="61.2" y="102" width="2.0" height="4" fill="#5e5316"/><rect x="63.2" y="102" width="2.0" height="4" fill="#1d435e"/><rect x="16.3" y="108" width="16.3" height="4" fill="#64879a"/><rect x="32.6" y="108" width="2.0" height="4" fill="#676767"/><rect x="34.7" y="108" width="2.0" height="4" fill="#1d435e"/><rect x="36.7" y="108" width="2.0" height="4" fill="#5e5316"/><rect x="20.4" y="114" width="2.0" height="4" fill="#676767"/><rect x="22.4" y="114" width="46.9" height="4" fill="#727f6a"/><rect x="69.4" y="114" width="2.0" height="4" fill="#676767"/><rect x="73.4" y="114" width="2.0" height="4" fill="#676767"/><rect x="75.5" y="114" width="46.9" height="4" fill="#727f6a"/><rect x="122.4" y="114" width="2.0" height="4" fill="#676767"/><rect x="20.4" y="120" width="2.0" height="4" fill="#676767"/><rect x="22.4" y="120" width="46.9" height="4" fill="#727f6a"/><rect x="69.4" y="120" width="2.0" height="4" fill="#676767"/><rect x="16.3" y="126" width="2.0" height="4" fill="#5e5316"/><rect x="18.4" y="126" width="2.0" height="4" fill="#1d435e"/><rect x="12.2" y="132" width="4.1" height="4" fill="#545454"/><rect x="12.2" y="144" width="2.0" height="4" fill="#545454"/><rect x="14.3" y="144" width="24.5" height="4" fill="#397d6f"/><rect x="40.8" y="144" width="16.3" height="4" fill="#64879a"/><rect x="57.1" y="144" width="2.0" height="4" fill="#676767"/><rect x="59.2" y="144" width="2.0" height="4" fill="#1d435e"/><rect x="61.2" y="144" width="2.0" height="4" fill="#5e5316"/><rect x="63.2" y="144" width="2.0" height="4" fill="#727f6a"/><rect x="65.3" y="144" width="2.0" height="4" fill="#676767"/><rect x="69.4" y="144" width="2.0" height="4" fill="#727f6a"/><rect x="71.4" y="144" width="2.0" height="4" fill="#676767"/><rect x="75.5" y="144" width="2.0" height="4" fill="#727f6a"/><rect x="77.5" y="144" width="2.0" height="4" fill="#5e5316"/><rect x="79.6" y="144" width="2.0" height="4" fill="#1d435e"/><rect x="83.6" y="144" width="4.1" height="4" fill="#545454"/><rect x="12.2" y="156" width="2.0" height="4" fill="#545454"/><rect x="14.3" y="156" width="34.7" height="4" fill="#397d6f"/><rect x="16.3" y="162" width="22.4" height="4" fill="#64879a"/><rect x="38.8" y="162" width="2.0" height="4" fill="#676767"/><rect x="40.8" y="162" width="2.0" height="4" fill="#1d435e"/><rect x="42.8" y="162" width="8.2" height="4" fill="#3d6484"/><rect x="51.0" y="162" width="2.0" height="4" fill="#1d435e"/><rect x="16.3" y="168" width="16.3" height="4" fill="#64879a"/><rect x="32.6" y="168" width="2.0" height="4" fill="#676767"/><rect x="34.7" y="168" width="2.0" height="4" fill="#1d435e"/><rect x="36.7" y="168" width="2.0" height="4" fill="#5e5316"/><rect x="20.4" y="174" width="2.0" height="4" fill="#676767"/><rect x="22.4" y="174" width="49.0" height="4" fill="#727f6a"/><rect x="71.4" y="174" width="2.0" height="4" fill="#676767"/><rect x="75.5" y="174" width="40.8" height="4" fill="#727f6a"/><rect x="116.3" y="174" width="2.0" height="4" fill="#676767"/><rect x="20.4" y="180" width="42.8" height="4" fill="#727f6a"/><rect x="63.2" y="180" width="2.0" height="4" fill="#676767"/><rect x="16.3" y="186" width="2.0" height="4" fill="#5e5316"/><rect x="18.4" y="186" width="2.0" height="4" fill="#1d435e"/><rect x="16.3" y="192" width="16.3" height="4" fill="#64879a"/><rect x="32.6" y="192" width="2.0" height="4" fill="#676767"/><rect x="34.7" y="192" width="2.0" height="4" fill="#1d435e"/><rect x="36.7" y="192" width="2.0" height="4" fill="#5e5316"/><rect x="38.8" y="192" width="2.0" height="4" fill="#676767"/><rect x="40.8" y="192" width="49.0" height="4" fill="#727f6a"/><rect x="89.8" y="192" width="2.0" height="4" fill="#676767"/><rect x="93.8" y="192" width="2.0" height="4" fill="#727f6a"/><rect x="95.9" y="192" width="2.0" height="4" fill="#676767"/><rect x="100.0" y="192" width="2.0" height="4" fill="#727f6a"/><rect x="102.0" y="192" width="2.0" height="4" fill="#5e5316"/><rect x="104.0" y="192" width="2.0" height="4" fill="#1d435e"/><rect x="12.2" y="198" width="4.1" height="4" fill="#545454"/><rect x="12.2" y="210" width="2.0" height="4" fill="#545454"/><rect x="14.3" y="210" width="8.2" height="4" fill="#3d6484"/><rect x="16.3" y="216" width="16.3" height="4" fill="#64879a"/><rect x="32.6" y="216" width="2.0" height="4" fill="#676767"/><rect x="34.7" y="216" width="2.0" height="4" fill="#1d435e"/><rect x="36.7" y="216" width="2.0" height="4" fill="#5e5316"/><rect x="38.8" y="216" width="2.0" height="4" fill="#676767"/><rect x="40.8" y="216" width="49.0" height="4" fill="#727f6a"/><rect x="89.8" y="216" width="2.0" height="4" fill="#676767"/><rect x="93.8" y="216" width="2.0" height="4" fill="#676767"/><rect x="95.9" y="216" width="46.9" height="4" fill="#727f6a"/><rect x="142.8" y="216" width="2.0" height="4" fill="#676767"/><rect x="16.3" y="222" width="26.5" height="4" fill="#64879a"/><rect x="42.8" y="222" width="2.0" height="4" fill="#676767"/><rect x="44.9" y="222" width="2.0" height="4" fill="#1d435e"/><rect x="46.9" y="222" width="8.2" height="4" fill="#3d6484"/><rect x="55.1" y="222" width="2.0" height="4" fill="#1d435e"/><rect x="12.2" y="228" width="2.0" height="4" fill="#545454"/><rect x="16.3" y="234" width="2.0" height="4" fill="#545454"/><rect x="18.4" y="234" width="22.4" height="4" fill="#397d6f"/><rect x="42.8" y="234" width="8.2" height="4" fill="#64879a"/><rect x="51.0" y="234" width="2.0" height="4" fill="#676767"/><rect x="53.0" y="234" width="2.0" height="4" fill="#1d435e"/><rect x="55.1" y="234" width="2.0" height="4" fill="#5e5316"/><rect x="57.1" y="234" width="4.1" height="4" fill="#727f6a"/><rect x="61.2" y="234" width="2.0" height="4" fill="#676767"/><rect x="65.3" y="234" width="6.1" height="4" fill="#727f6a"/><rect x="71.4" y="234" width="2.0" height="4" fill="#676767"/><rect x="75.5" y="234" width="2.0" height="4" fill="#727f6a"/><rect x="77.5" y="234" width="2.0" height="4" fill="#5e5316"/><rect x="79.6" y="234" width="2.0" height="4" fill="#1d435e"/><rect x="83.6" y="234" width="4.1" height="4" fill="#545454"/><rect x="16.3" y="240" width="2.0" height="4" fill="#545454"/><rect x="18.4" y="240" width="40.8" height="4" fill="#397d6f"/><rect x="61.2" y="240" width="4.1" height="4" fill="#545454"/><rect x="12.2" y="246" width="4.1" height="4" fill="#545454"/><rect x="16.3" y="246" width="8.2" height="4" fill="#3d6484"/><rect x="24.5" y="246" width="2.0" height="4" fill="#545454"/><rect x="12.2" y="252" width="2.0" height="4" fill="#545454"/><rect x="14.3" y="252" width="20.4" height="4" fill="#397d6f"/><rect x="16.3" y="258" width="20.4" height="4" fill="#64879a"/><rect x="36.7" y="258" width="2.0" height="4" fill="#676767"/><rect x="38.8" y="258" width="2.0" height="4" fill="#1d435e"/><rect x="40.8" y="258" width="8.2" height="4" fill="#3d6484"/><rect x="49.0" y="258" width="2.0" height="4" fill="#1d435e"/><rect x="16.3" y="264" width="10.2" height="4" fill="#64879a"/><rect x="26.5" y="264" width="2.0" height="4" fill="#676767"/><rect x="28.6" y="264" width="18.4" height="4" fill="#7f5e50"/><rect x="16.3" y="270" width="16.3" height="4" fill="#64879a"/><rect x="32.6" y="270" width="2.0" height="4" fill="#676767"/><rect x="34.7" y="270" width="2.0" height="4" fill="#1d435e"/><rect x="36.7" y="270" width="2.0" height="4" fill="#5e5316"/><rect x="20.4" y="276" width="2.0" height="4" fill="#676767"/><rect x="22.4" y="276" width="49.0" height="4" fill="#727f6a"/><rect x="71.4" y="276" width="2.0" height="4" fill="#676767"/><rect x="75.5" y="276" width="40.8" height="4" fill="#727f6a"/><rect x="116.3" y="276" width="2.0" height="4" fill="#676767"/><rect x="20.4" y="282" width="42.8" height="4" fill="#727f6a"/><rect x="63.2" y="282" width="2.0" height="4" fill="#676767"/><rect x="16.3" y="288" width="2.0" height="4" fill="#5e5316"/><rect x="18.4" y="288" width="2.0" height="4" fill="#1d435e"/><rect x="12.2" y="294" width="4.1" height="4" fill="#545454"/><rect x="12.2" y="306" width="2.0" height="4" fill="#545454"/><rect x="14.3" y="306" width="24.5" height="4" fill="#397d6f"/><rect x="16.3" y="312" width="18.4" height="4" fill="#64879a"/><rect x="34.7" y="312" width="2.0" height="4" fill="#676767"/><rect x="36.7" y="312" width="2.0" height="4" fill="#1d435e"/><rect x="38.8" y="312" width="6.1" height="4" fill="#727f6a"/><rect x="44.9" y="312" width="2.0" height="4" fill="#1d435e"/><rect x="16.3" y="318" width="16.3" height="4" fill="#64879a"/><rect x="32.6" y="318" width="2.0" height="4" fill="#676767"/><rect x="34.7" y="318" width="2.0" height="4" fill="#1d435e"/><rect x="36.7" y="318" width="2.0" height="4" fill="#5e5316"/><rect x="38.8" y="318" width="8.2" height="4" fill="#727f6a"/><rect x="46.9" y="318" width="2.0" height="4" fill="#676767"/><rect x="51.0" y="318" width="2.0" height="4" fill="#676767"/><rect x="53.0" y="318" width="42.8" height="4" fill="#727f6a"/><rect x="95.9" y="318" width="2.0" height="4" fill="#676767"/><rect x="100.0" y="318" width="2.0" height="4" fill="#727f6a"/><rect x="102.0" y="318" width="2.0" height="4" fill="#5e5316"/><rect x="104.0" y="318" width="2.0" height="4" fill="#1d435e"/><rect x="12.2" y="324" width="4.1" height="4" fill="#545454"/><rect x="8.2" y="330" width="6.1" height="4" fill="#545454"/><rect x="4.1" y="336" width="2.0" height="4" fill="#533652"/><rect x="6.1" y="336" width="2.0" height="4" fill="#676767"/><rect x="0.0" y="342" width="2.0" height="4" fill="#5e5316"/></svg><div class="b " style="left:2900px;top:184px;width:1px;height:1474px;background:#2a2a2a;"></div><div class="b " style="left:2900px;top:342px;width:28px;height:543px;background:#434545;"></div><div class="b " style="left:2919px;top:212px;width:9px;height:16px;background:#2b8cff;"></div><div class="b " style="left:2919px;top:290px;width:9px;height:16px;background:#2b8cff;"></div><div class="b " style="left:2909px;top:893px;width:9px;height:16px;background:#9cc3e8;"></div><div class="b" style="left:0;top:0;width:3024px;height:2px;background:#3e4244;"></div></div></body></html>
